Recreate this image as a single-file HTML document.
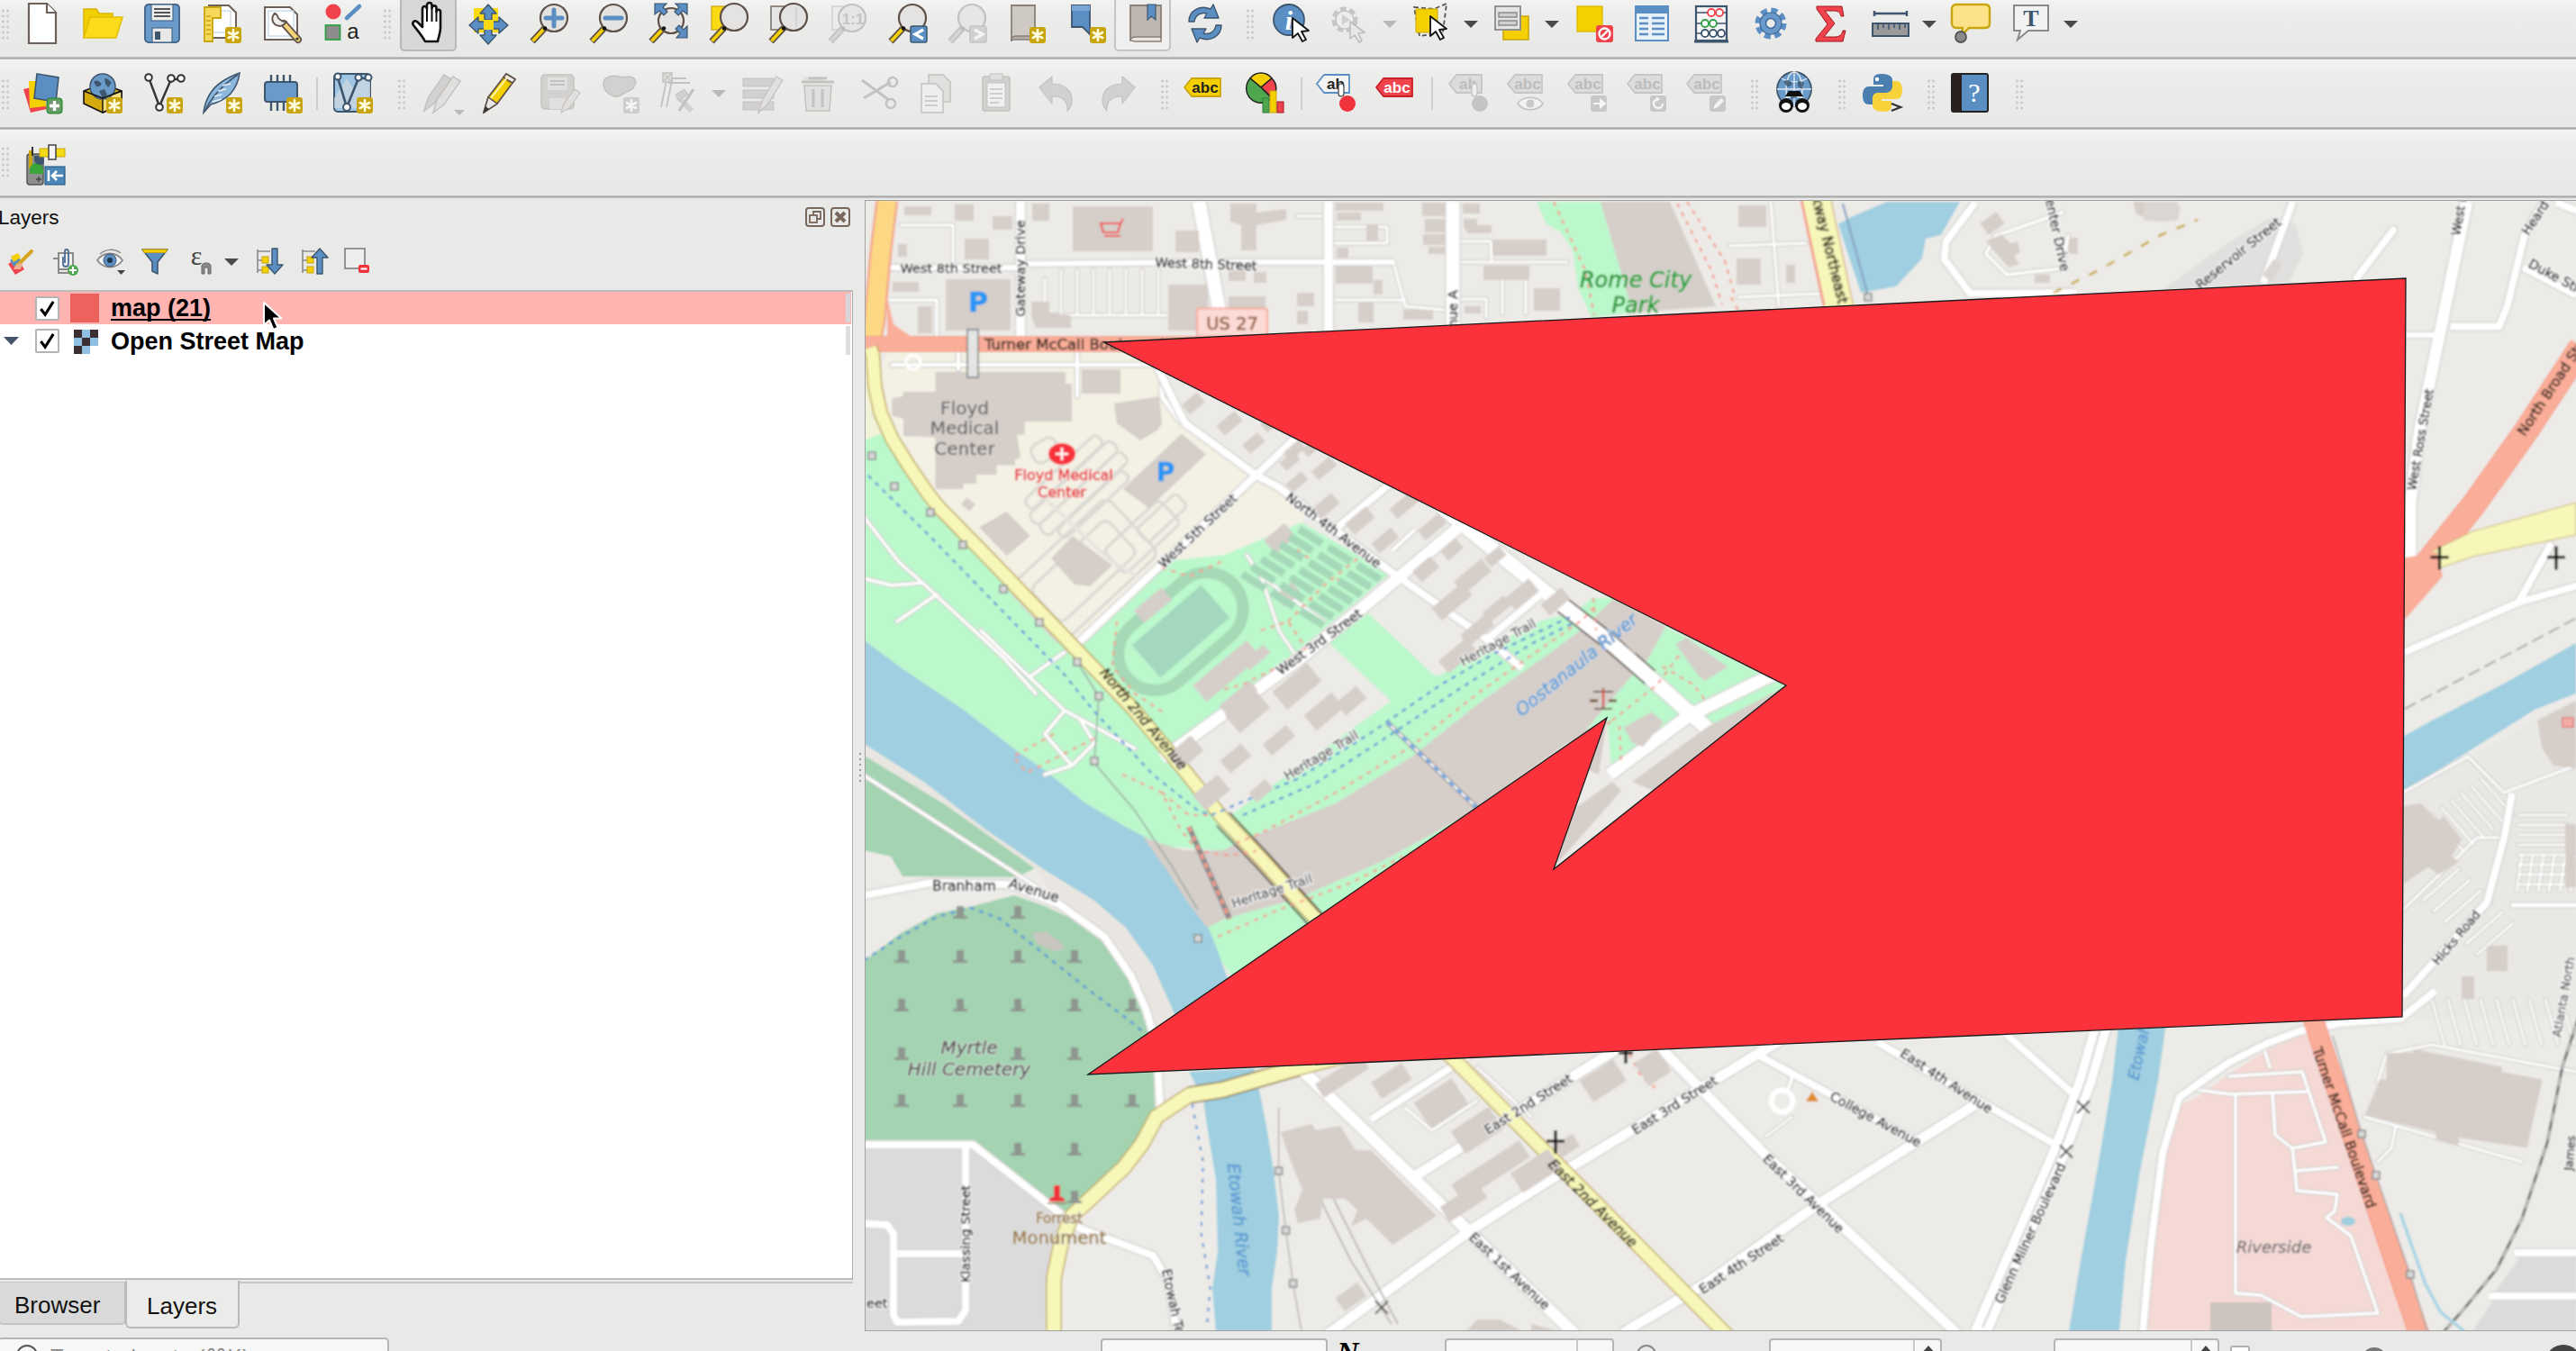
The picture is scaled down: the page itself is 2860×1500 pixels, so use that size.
<!DOCTYPE html>
<html lang="en">
<head>
<meta charset="utf-8">
<title>QGIS</title>
<style>
*{box-sizing:border-box;margin:0;padding:0}
html,body{width:2860px;height:1500px;overflow:hidden;background:#e9e9e8;font-family:"Liberation Sans",sans-serif;color:#000}
#app{position:relative;width:2860px;height:1500px;overflow:hidden;background:#e9e9e8}
.tbrow{position:absolute;left:0;width:2860px;background:linear-gradient(#f3f3f3,#ececeb 25%,#e8e8e7)}
.sep{position:absolute;left:0;width:2860px;height:3px;background:linear-gradient(#d6d6d6,#a9a9a9 33%,#a9a9a9 75%,#eee)}
.ic{position:absolute;width:48px;height:48px;overflow:visible}
.grip{position:absolute;width:10px;height:35px;background-image:radial-gradient(circle,#cdcdcd 1.4px,transparent 1.8px);background-size:5px 6px}
.dd{position:absolute;width:0;height:0;border-left:8px solid transparent;border-right:8px solid transparent;border-top:8px solid #4a4a4a}
.dd.dis{border-top-color:#b9b9b9}
#panel-title{position:absolute;left:-2px;top:228px;font-size:22.5px;line-height:28px;color:#111}
#tree{position:absolute;left:0;top:322px;width:947px;height:1099px;background:#fff;border-top:2px solid #bdbdbd;border-right:1px solid #adadad;border-bottom:2px solid #bdbdbd}
.row{position:absolute;left:0;width:945px;height:36px}
.row .lbl{position:absolute;left:123px;top:2px;font-size:27px;line-height:32px;font-weight:bold;white-space:nowrap;color:#000}
.cb{position:absolute;left:39px;width:27px;height:27px;background:#fff;border:2px solid #b4b4b4;border-radius:2px}
.tab{position:absolute;font-size:26px;line-height:30px;color:#111;border:2px solid #bcbcbc;border-top:none}
#map{position:absolute;left:960px;top:222px;width:1900px;height:1256px;border:1px solid #a2a2a2;border-right:none;box-shadow:inset 1px 1px 0 #d5d5d5,inset 0 -1px 0 #d5d5d5;background:#f1eeea;overflow:hidden}
#map svg{position:absolute;left:-961px;top:-223px}
</style>
</head>
<body>
<div id="app">
<!-- TOOLBARS -->
<div class="tbrow" style="top:0;height:63px"></div>
<div class="sep" style="top:63px"></div>
<div class="tbrow" style="top:66px;height:75px"></div>
<div class="sep" style="top:141px"></div>
<div class="tbrow" style="top:144px;height:73px"></div>
<div class="sep" style="top:217px"></div>
<div id="toolbar-icons">
<svg class="ic" style="left:23.0px;top:2.0px;width:48px;height:48px" viewBox="0 0 48 48"><path d="M9 2h20l10 10v34H9z" fill="#fff" stroke="#6d6058" stroke-width="2.2"/><path d="M29 2v10h10" fill="#fff" stroke="#6d6058" stroke-width="2.2"/></svg>
<svg class="ic" style="left:90.0px;top:2.0px;width:48px;height:48px" viewBox="0 0 48 48"><path d="M3 40V8h14l3 5h15v6H12z" fill="#f2cf00" stroke="#d9b500" stroke-width="1.5"/><path d="M3 40l7-23h36l-7 23z" fill="#fcdb1c" stroke="#e0bd00" stroke-width="1.5"/></svg>
<svg class="ic" style="left:156.0px;top:2.0px;width:48px;height:48px" viewBox="0 0 48 48"><rect x="5" y="3" width="38" height="42" rx="4" fill="#6a9ac9" stroke="#46688c" stroke-width="2"/><rect x="12" y="3" width="24" height="18" fill="#eee" stroke="#46688c" stroke-width="1.2"/><path d="M15 8h18M15 12h18M15 16h18" stroke="#555" stroke-width="2"/><rect x="13" y="29" width="22" height="16" fill="#e8e8e8" stroke="#46688c" stroke-width="1.2"/><rect x="16" y="33" width="6" height="9" fill="#3d566e"/></svg>
<svg class="ic" style="left:222.0px;top:2.0px;width:48px;height:48px" viewBox="0 0 48 48"><path d="M10 4h22l8 8v28H10z" fill="#fff" stroke="#6d6058" stroke-width="2"/><path d="M14 10h20v24H14z" fill="none" stroke="#bcd" stroke-width="1"/><path d="M5 6h18v12h-9v26H5z" fill="#f6d95a" stroke="#c9a50d" stroke-width="1.8"/><path d="M7 16h5M7 21h5M7 26h5M7 31h5M7 36h5" stroke="#c9a50d" stroke-width="1.5"/><g transform="translate(37,37)"><rect x="-9" y="-9" width="18" height="18" rx="3" fill="#c9a50d"/><path d="M0-6v12M-5.2-3l10.4 6M-5.2 3l10.4-6" stroke="#fffbe0" stroke-width="2.6" stroke-linecap="round"/></g></svg>
<svg class="ic" style="left:289.0px;top:2.0px;width:48px;height:48px" viewBox="0 0 48 48"><path d="M5 6h28l8 8v28H5z" fill="#fff" stroke="#6d6058" stroke-width="2"/><rect x="9" y="10" width="28" height="28" fill="none" stroke="#bcd6e6" stroke-width="1.2"/><path d="M42 42l-16-18" stroke="#5e5149" stroke-width="8" stroke-linecap="round"/><path d="M42 42l-15-17" stroke="#f2d37a" stroke-width="4.6" stroke-linecap="round"/><path d="M17 12a8 8 0 1 0 11 11l-4-1-4-4-1-4z" fill="#eee" stroke="#5e5149" stroke-width="1.8" transform="rotate(-8 22 18)"/><circle cx="41" cy="41" r="1.6" fill="#333"/></svg>
<svg class="ic" style="left:355.0px;top:2.0px;width:48px;height:48px" viewBox="0 0 48 48"><circle cx="15" cy="11" r="8.5" fill="#f0434b"/><rect x="6.5" y="26" width="16" height="16" fill="#8c8c8c" stroke="#2ea043" stroke-width="1.8"/><path d="M30 18l14-13" stroke="#5b8fc4" stroke-width="4.5" stroke-linecap="round"/><text x="37" y="41" font-family="Liberation Sans,sans-serif" font-size="24" text-anchor="middle" fill="#222">a</text></svg>
<div class="grip" style="left:425px;top:9px"></div>
<div style="position:absolute;left:444px;top:-3px;width:63px;height:60px;background:#d7d7d7;border:2px solid #b9b9b9;border-radius:5px"></div>
<svg class="ic" style="left:452.0px;top:2.0px;width:48px;height:48px" viewBox="0 0 48 48"><path d="M20 44c-3-6-9-13-13-18-2-3 1-6 4-4l6 6V8c0-4 5-4 5 0v-4c0-4 5.5-4 5.5 0v3c0-3.5 5-3.5 5 0v4c0-3 4.5-3 4.5 0v18c0 6-2 9-3 15z" fill="#fff" stroke="#111" stroke-width="2.6" stroke-linejoin="round"/><path d="M22 8v14M27.5 7v15M32.5 10v12" stroke="#111" stroke-width="2"/></svg>
<svg class="ic" style="left:518.0px;top:2.0px;width:48px;height:48px" viewBox="0 0 48 48"><rect x="8" y="7" width="27" height="27" fill="#fbd913"/><g fill="#5b8fc4" stroke="#3d566e" stroke-width="1.4" stroke-linejoin="round"><path d="M24 3l9 10h-5v7h-8v-7h-5z"/><path d="M24 47l9-10h-5v-7h-8v7h-5z"/><path d="M3 26l10-9v5h7v8h-7v5z"/><path d="M46 26l-10-9v5h-7v8h7v5z"/></g><rect x="19" y="20" width="11" height="11" fill="#fbd913"/></svg>
<svg class="ic" style="left:584.6px;top:2.0px;width:48px;height:48px" viewBox="0 0 48 48"><path d="M6 44l14-15" stroke="#5e5149" stroke-width="7" stroke-linecap="butt"/><path d="M6.5 43.5l13-14" stroke="#f5d000" stroke-width="3.6"/><circle cx="30" cy="18" r="15" fill="#e5e3e1" stroke="#5e5149" stroke-width="2.2"/><circle cx="20" cy="29.5" r="2.3" fill="#111"/><path d="M30 9v18M21 18h18" stroke="#5b8fc4" stroke-width="5" stroke-linecap="round"/></svg>
<svg class="ic" style="left:651.0px;top:2.0px;width:48px;height:48px" viewBox="0 0 48 48"><path d="M6 44l14-15" stroke="#5e5149" stroke-width="7" stroke-linecap="butt"/><path d="M6.5 43.5l13-14" stroke="#f5d000" stroke-width="3.6"/><circle cx="30" cy="18" r="15" fill="#e5e3e1" stroke="#5e5149" stroke-width="2.2"/><circle cx="20" cy="29.5" r="2.3" fill="#111"/><path d="M21 18h18" stroke="#5b8fc4" stroke-width="5" stroke-linecap="round"/></svg>
<svg class="ic" style="left:717.0px;top:2.0px;width:48px;height:48px" viewBox="0 0 48 48"><path d="M6 44l14-15" stroke="#5e5149" stroke-width="7" stroke-linecap="butt"/><path d="M6.5 43.5l13-14" stroke="#f5d000" stroke-width="3.6"/><circle cx="28" cy="21" r="14" fill="#e5e3e1" stroke="#5e5149" stroke-width="2.2"/><circle cx="20" cy="29.5" r="2.3" fill="#111"/><g fill="#5b8fc4" stroke="#3d566e" stroke-width="1.2"><path d="M10 2h13l-4 4 5 5-4 4-5-5-5 4z"/><path d="M46 2H33l4 4-5 5 4 4 5-5 5 4z"/><path d="M46 40V27l-4 4-5-5-4 4 5 5-4 5z"/></g></svg>
<svg class="ic" style="left:783.6px;top:2.0px;width:48px;height:48px" viewBox="0 0 48 48"><rect x="6" y="5" width="22" height="26" fill="#fbd913" stroke="#c9a50d" stroke-width="1.2"/><path d="M6 44l14-15" stroke="#5e5149" stroke-width="7" stroke-linecap="butt"/><path d="M6.5 43.5l13-14" stroke="#f5d000" stroke-width="3.6"/><circle cx="31" cy="17" r="15" fill="#e5e3e1" stroke="#5e5149" stroke-width="2.2"/><circle cx="20" cy="29.5" r="2.3" fill="#111"/></svg>
<svg class="ic" style="left:850.0px;top:2.0px;width:48px;height:48px" viewBox="0 0 48 48"><rect x="6" y="5" width="22" height="26" fill="#e6e6e6" stroke="#8a8078" stroke-width="1.8"/><path d="M6 44l14-15" stroke="#5e5149" stroke-width="7" stroke-linecap="butt"/><path d="M6.5 43.5l13-14" stroke="#f5d000" stroke-width="3.6"/><circle cx="31" cy="17" r="15" fill="#e5e3e1" stroke="#5e5149" stroke-width="2.2"/><circle cx="20" cy="29.5" r="2.3" fill="#111"/><path d="M34 6v22" stroke="#ccc" stroke-width="1.5"/></svg>
<svg class="ic" style="left:916.0px;top:2.0px;width:48px;height:48px" viewBox="0 0 48 48"><rect x="8" y="5" width="22" height="26" fill="#ececec" stroke="#cfcfcf" stroke-width="1.5"/><path d="M6 44l14-15" stroke="#c2c2c2" stroke-width="7" stroke-linecap="butt"/><path d="M6.5 43.5l13-14" stroke="#d4d4d4" stroke-width="3.6"/><circle cx="30" cy="18" r="15" fill="#e6e6e6" stroke="#c2c2c2" stroke-width="2.2"/><circle cx="20" cy="29.5" r="2.3" fill="#bbb"/><text x="31" y="25" font-family="Liberation Sans,sans-serif" font-weight="bold" font-size="17" text-anchor="middle" fill="#c4c4c4">1:1</text></svg>
<svg class="ic" style="left:982.6px;top:2.0px;width:48px;height:48px" viewBox="0 0 48 48"><path d="M6 44l14-15" stroke="#5e5149" stroke-width="7" stroke-linecap="butt"/><path d="M6.5 43.5l13-14" stroke="#f5d000" stroke-width="3.6"/><circle cx="30" cy="18" r="15" fill="#e5e3e1" stroke="#5e5149" stroke-width="2.2"/><circle cx="20" cy="29.5" r="2.3" fill="#111"/><rect x="28" y="27" width="18" height="18" rx="2" fill="#5b8fc4" stroke="#3d566e" stroke-width="1.5"/><path d="M42 31l-9 5 9 5" stroke="#fff" stroke-width="3.2" fill="none"/></svg>
<svg class="ic" style="left:1049.0px;top:2.0px;width:48px;height:48px" viewBox="0 0 48 48"><path d="M6 44l14-15" stroke="#c2c2c2" stroke-width="7" stroke-linecap="butt"/><path d="M6.5 43.5l13-14" stroke="#d4d4d4" stroke-width="3.6"/><circle cx="30" cy="18" r="15" fill="#e6e6e6" stroke="#c2c2c2" stroke-width="2.2"/><circle cx="20" cy="29.5" r="2.3" fill="#bbb"/><rect x="28" y="27" width="18" height="18" rx="2" fill="#d2d2d2" stroke="#c2c2c2" stroke-width="1.5"/><path d="M33 31l9 5-9 5" stroke="#f4f4f4" stroke-width="3.2" fill="none"/></svg>
<svg class="ic" style="left:1115.0px;top:2.0px;width:48px;height:48px" viewBox="0 0 48 48"><path d="M8 4h26v36H14c-4 0-6 2-6 4z" fill="#cfc9c4" stroke="#8a8078" stroke-width="1.8"/><path d="M8 42c0-3 3-4 6-4h20v4z" fill="#b5aea8" stroke="#8a8078" stroke-width="1.5"/><g transform="translate(37,37)"><rect x="-9" y="-9" width="18" height="18" rx="3" fill="#c9a50d"/><path d="M0-6v12M-5.2-3l10.4 6M-5.2 3l10.4-6" stroke="#fffbe0" stroke-width="2.6" stroke-linecap="round"/></g></svg>
<svg class="ic" style="left:1181.6px;top:2.0px;width:48px;height:48px" viewBox="0 0 48 48"><path d="M8 4h20v32l-8-8h-12z" fill="#5b8fc4" stroke="#3d566e" stroke-width="1.8"/><path d="M8 4h20v6H8z" fill="#7aa8d6"/><g transform="translate(37,37)"><rect x="-9" y="-9" width="18" height="18" rx="3" fill="#c9a50d"/><path d="M0-6v12M-5.2-3l10.4 6M-5.2 3l10.4-6" stroke="#fffbe0" stroke-width="2.6" stroke-linecap="round"/></g></svg>
<div style="position:absolute;left:1237px;top:-3px;width:63px;height:60px;background:#efefef;border:2px solid #c4c4c4;border-radius:5px"></div>
<svg class="ic" style="left:1248.0px;top:2.0px;width:48px;height:48px" viewBox="0 0 48 48"><path d="M7 4h34v36H14c-5 0-7 1-7 3z" fill="#bdb5af" stroke="#8a8078" stroke-width="1.8"/><path d="M7 43c0-3 3-4 7-4h27v5H12z" fill="#e9e6e3" stroke="#8a8078" stroke-width="1.5"/><path d="M26 3h9v17l-4.5-4-4.5 4z" fill="#5b8fc4" stroke="#3d566e" stroke-width="1.2"/></svg>
<svg class="ic" style="left:1314.0px;top:2.0px;width:48px;height:48px" viewBox="0 0 48 48"><g fill="#5b8fc4" stroke="#3d566e" stroke-width="1.4" stroke-linejoin="round"><path d="M6 22C6 10 18 3 30 8l3-5 6 15-16 0 3-5c-7-2-13 2-14 9z"/><path d="M42 26c0 12-12 19-24 14l-3 5-6-15 16 0-3 5c7 2 13-2 14-9z"/></g></svg>
<div class="grip" style="left:1383px;top:9px"></div>
<svg class="ic" style="left:1411.0px;top:2.0px;width:48px;height:48px" viewBox="0 0 48 48"><circle cx="20" cy="20" r="17" fill="#5b8fc4" stroke="#3d566e" stroke-width="1.8"/><text x="20" y="31" font-family="Liberation Serif,serif" font-style="italic" font-weight="bold" font-size="30" text-anchor="middle" fill="#fff">i</text><path d="M24 18l18 14-8 1 5 9-4 2-5-9-6 5z" fill="#fff" stroke="#111" stroke-width="1.8" stroke-linejoin="round"/></svg>
<svg class="ic" style="left:1473.0px;top:2.0px;width:48px;height:48px" viewBox="0 0 48 48"><circle cx="20" cy="20" r="11" fill="#e4e4e4" stroke="#c6c6c6" stroke-width="7" stroke-dasharray="6 3.4"/><circle cx="20" cy="20" r="10" fill="#ededed" stroke="#c6c6c6" stroke-width="1.5"/><path d="M17 14l9 6-9 6z" fill="#cfcfcf"/><path d="M26 22l16 12-7 1 4 8-3 2-5-8-5 4z" fill="#e8e8e8" stroke="#bdbdbd" stroke-width="1.6" stroke-linejoin="round"/></svg>
<div class="dd dis" style="left:1535px;top:23px"></div>
<svg class="ic" style="left:1564.0px;top:2.0px;width:48px;height:48px" viewBox="0 0 48 48"><path d="M6 6l22 2 14-6-4 32-26 4z" fill="none" stroke="#555" stroke-width="1.8" stroke-dasharray="5 3"/><path d="M8 8h24v26H8z" fill="#f5d000" stroke="#c9a50d" stroke-width="1"/><path d="M24 16l18 14-8 1 5 9-4 2-5-9-6 5z" fill="#fff" stroke="#111" stroke-width="1.8" stroke-linejoin="round"/></svg>
<div class="dd" style="left:1625px;top:23px"></div>
<svg class="ic" style="left:1655.0px;top:2.0px;width:48px;height:48px" viewBox="0 0 48 48"><rect x="14" y="16" width="28" height="26" fill="#f5d000" stroke="#c9a50d" stroke-width="1.5"/><rect x="5" y="5" width="28" height="26" fill="#e4e4e4" stroke="#8a8a8a" stroke-width="1.8"/><path d="M9 12h20v5H9zM9 21h20v5H9z" fill="#d0d0d0" stroke="#8a8a8a" stroke-width="1.4"/></svg>
<div class="dd" style="left:1715px;top:23px"></div>
<svg class="ic" style="left:1745.0px;top:2.0px;width:48px;height:48px" viewBox="0 0 48 48"><rect x="6" y="5" width="28" height="28" fill="#f5d000" stroke="#d9b500" stroke-width="1.2"/><rect x="27" y="26" width="19" height="19" rx="3" fill="#f0434b"/><circle cx="36.5" cy="35.5" r="6" fill="none" stroke="#fff" stroke-width="2.4"/><path d="M32 40l9-9" stroke="#fff" stroke-width="2.4"/></svg>
<svg class="ic" style="left:1810.0px;top:2.0px;width:48px;height:48px" viewBox="0 0 48 48"><rect x="6" y="5" width="36" height="38" fill="#e9f1f8" stroke="#5b8fc4" stroke-width="2"/><path d="M6 5h36v8H6z" fill="#5b8fc4"/><path d="M10 18h10M24 18h14M10 24h10M24 24h14M10 30h10M24 30h14M10 36h10M24 36h14" stroke="#5b8fc4" stroke-width="2.4"/></svg>
<svg class="ic" style="left:1876.0px;top:2.0px;width:48px;height:48px" viewBox="0 0 48 48"><rect x="7" y="5" width="34" height="38" fill="#f4f4f4" stroke="#3d566e" stroke-width="2.2"/><path d="M5 44h38" stroke="#3d566e" stroke-width="3"/><path d="M7 12h34M7 24h34M7 35h34" stroke="#3d566e" stroke-width="1.6"/><g stroke-width="1.8" fill="#fff"><circle cx="24" cy="12" r="4" stroke="#f0434b"/><circle cx="33" cy="12" r="4" stroke="#f0434b"/><circle cx="17" cy="24" r="4" stroke="#2ea043"/><circle cx="26" cy="24" r="4" stroke="#2ea043"/><circle cx="17" cy="35" r="4" stroke="#3d566e"/><circle cx="26" cy="35" r="4" stroke="#3d566e"/><circle cx="35" cy="35" r="4" stroke="#3d566e"/></g></svg>
<svg class="ic" style="left:1942.0px;top:2.0px;width:48px;height:48px" viewBox="0 0 48 48"><circle cx="24" cy="24" r="13" fill="none" stroke="#5b8fc4" stroke-width="9" stroke-dasharray="6.2 4"/><circle cx="24" cy="24" r="12" fill="#6a9ac9" stroke="#3d6a9c" stroke-width="1.2"/><circle cx="24" cy="24" r="5.5" fill="#ececec" stroke="#3d6a9c" stroke-width="1.5"/></svg>
<svg class="ic" style="left:2007.0px;top:2.0px;width:48px;height:48px" viewBox="0 0 48 48"><path d="M10 5h28l2 11h-3c-1-4-3-6-8-6H19l11 14-12 15h12c5 0 8-2 9-7h3l-3 12H9v-3l13-16L10 8z" fill="#f0434b" stroke="#a01820" stroke-width="1"/></svg>
<svg class="ic" style="left:2075.0px;top:2.0px;width:48px;height:48px" viewBox="0 0 48 48"><path d="M6 10v6M42 10v6M6 13h36" stroke="#3d566e" stroke-width="2.4"/><rect x="4" y="24" width="40" height="14" fill="#9a9a9a" stroke="#3d566e" stroke-width="2"/><path d="M10 24v7M16 24v5M22 24v7M28 24v5M34 24v7M40 24v5" stroke="#3d566e" stroke-width="1.6"/></svg>
<div class="dd" style="left:2134px;top:23px"></div>
<svg class="ic" style="left:2164.0px;top:2.0px;width:48px;height:48px" viewBox="0 0 48 48"><path d="M8 3h32c3 0 5 2 5 5v16c0 3-2 5-5 5H22l-8 8 1-8H8c-3 0-5-2-5-5V8c0-3 2-5 5-5z" fill="#fce38a" stroke="#c9a50d" stroke-width="2.4"/><circle cx="13" cy="39" r="6" fill="#8a8a8a" stroke="#555" stroke-width="1.8"/></svg>
<svg class="ic" style="left:2230.0px;top:2.0px;width:48px;height:48px" viewBox="0 0 48 48"><path d="M6 4h38v28H22l-12 10 3-10H6z" fill="#f2f2f2" stroke="#8a8a8a" stroke-width="2"/><text x="25" y="27" font-family="Liberation Serif,serif" font-weight="bold" font-size="26" text-anchor="middle" fill="#3d566e">T</text></svg>
<div class="dd" style="left:2291px;top:23px"></div>
<svg class="ic" style="left:23.0px;top:79.0px;width:48px;height:48px" viewBox="0 0 48 48"><path d="M3 20l18-4 8 26-18 4z" fill="#f0434b"/><path d="M9 11l17 0 2 28-18 2z" fill="#f5d000"/><path d="M18 3l24 4-3 27-24-4z" fill="#5b8fc4" stroke="#3d566e" stroke-width="1.6"/><rect x="29" y="30" width="17" height="17" rx="3" fill="#4ea64e" stroke="#2e7d32" stroke-width="1"/><rect x="31" y="32" width="13" height="13" rx="1" fill="#8a8a8a" opacity=".55"/><path d="M37.5 33v11M32 38.500h11" stroke="#fff" stroke-width="3.4"/></svg>
<svg class="ic" style="left:90.0px;top:79.0px;width:48px;height:48px" viewBox="0 0 48 48"><path d="M3 22l21-8 21 8v14L24 46 3 36z" fill="#d4aa0f" stroke="#111" stroke-width="1.6" stroke-linejoin="round"/><path d="M24 30v16l21-10V22z" fill="#f6df7a" stroke="#111" stroke-width="1.4" stroke-linejoin="round"/><circle cx="24" cy="17" r="14" fill="#6a9ac9" stroke="#3d566e" stroke-width="1.5"/><path d="M14 12c3-3 6-1 8 1s-2 5-5 4zM26 8c3 0 6 2 8 5l-4 5-3-4zM20 22l6-2 3 6-5 4z" fill="#3d566e"/><path d="M3 22l21 8 21-8" fill="none" stroke="#111" stroke-width="1.4"/><g transform="translate(37,38)"><rect x="-9" y="-9" width="18" height="18" rx="3" fill="#c9a50d"/><path d="M0-6v12M-5.2-3l10.4 6M-5.2 3l10.4-6" stroke="#fffbe0" stroke-width="2.6" stroke-linecap="round"/></g></svg>
<svg class="ic" style="left:156.0px;top:79.0px;width:48px;height:48px" viewBox="0 0 48 48"><path d="M9 7l12 32 13-30h12" fill="none" stroke="#333" stroke-width="2.4"/><g fill="#fff" stroke="#333" stroke-width="2"><circle cx="9" cy="7" r="3.8"/><circle cx="21" cy="40" r="3.8"/><circle cx="34" cy="8" r="3.8"/><circle cx="45" cy="8" r="3.8"/></g><g transform="translate(38,38)"><rect x="-9" y="-9" width="18" height="18" rx="3" fill="#c9a50d"/><path d="M0-6v12M-5.2-3l10.4 6M-5.2 3l10.4-6" stroke="#fffbe0" stroke-width="2.6" stroke-linecap="round"/></g></svg>
<svg class="ic" style="left:222.0px;top:79.0px;width:48px;height:48px" viewBox="0 0 48 48"><path d="M4 46c2-14 8-26 20-34 6-4 14-8 20-10-1 8-4 16-10 23-6 6-14 10-22 12z" fill="#8db8de" stroke="#3d566e" stroke-width="1.6"/><path d="M5 45C12 30 24 16 42 4" fill="none" stroke="#3d566e" stroke-width="1.6"/><path d="M16 28l8-2M20 22l9-2M25 16l9-2M14 34l10-3" stroke="#e8f0f8" stroke-width="1.6"/><g transform="translate(38,38)"><rect x="-9" y="-9" width="18" height="18" rx="3" fill="#c9a50d"/><path d="M0-6v12M-5.2-3l10.4 6M-5.2 3l10.4-6" stroke="#fffbe0" stroke-width="2.6" stroke-linecap="round"/></g></svg>
<svg class="ic" style="left:289.0px;top:79.0px;width:48px;height:48px" viewBox="0 0 48 48"><path d="M12 4v10M19 4v10M26 4v10M33 4v10M12 34v10M19 34v10M26 34v10" stroke="#3d566e" stroke-width="2.4"/><rect x="5" y="12" width="36" height="22" rx="3" fill="#6a9ac9" stroke="#3d566e" stroke-width="2"/><g transform="translate(38,38)"><rect x="-9" y="-9" width="18" height="18" rx="3" fill="#c9a50d"/><path d="M0-6v12M-5.2-3l10.4 6M-5.2 3l10.4-6" stroke="#fffbe0" stroke-width="2.6" stroke-linecap="round"/></g></svg>
<div style="position:absolute;left:351px;top:86px;width:2px;height:36px;background:#cfcfcf"></div>
<svg class="ic" style="left:367.0px;top:79.0px;width:48px;height:48px" viewBox="0 0 48 48"><rect x="4" y="3" width="40" height="42" rx="4" fill="#9fc5e4" stroke="#3d566e" stroke-width="2"/><path d="M4 30l14-22 8 12 8-14 10 6v29H4z" fill="#c9d6df" opacity=".8"/><path d="M8 7l10 33 13-32h12" fill="none" stroke="#3d566e" stroke-width="2.6"/><g fill="#fff" stroke="#3d566e" stroke-width="2"><circle cx="8" cy="6" r="3.5"/><circle cx="18" cy="40" r="4"/><circle cx="31" cy="7" r="3.5"/><circle cx="42" cy="7" r="3.5"/></g><g transform="translate(38,38)"><rect x="-9" y="-9" width="18" height="18" rx="3" fill="#c9a50d"/><path d="M0-6v12M-5.2-3l10.4 6M-5.2 3l10.4-6" stroke="#fffbe0" stroke-width="2.6" stroke-linecap="round"/></g></svg>
<div class="grip" style="left:441px;top:87px"></div>
<svg class="ic" style="left:467.0px;top:79.0px;width:48px;height:48px" viewBox="0 0 48 48"><g fill="#d3d1cf" stroke="#c4c2c0" stroke-width="1.5"><path d="M4 44l4-14L26 4l8 5-18 26z"/><path d="M14 46l4-14L36 6l8 5-18 26z" fill="#e2e0de"/></g></svg>
<div class="dd dis" style="left:504px;top:122px;border-left-width:6px;border-right-width:6px;border-top-width:6px"></div>
<svg class="ic" style="left:531.0px;top:79.0px;width:48px;height:48px" viewBox="0 0 48 48"><path d="M6 46l5-17L31 3l10 6-20 27z" fill="#f5d000" stroke="#5e5149" stroke-width="1.8" stroke-linejoin="round"/><path d="M27 8l10 6" stroke="#c9a50d" stroke-width="2"/><path d="M31 3l10 6-3 4-10-6z" fill="#eee" stroke="#5e5149" stroke-width="1.5"/><path d="M6 46l5-17 10 7z" fill="#e8e8e8" stroke="#5e5149" stroke-width="1.5"/><path d="M6 46l2-7 4 3z" fill="#333"/><path d="M14 30L33 6" stroke="#fff7b0" stroke-width="2"/></svg>
<svg class="ic" style="left:596.6px;top:79.0px;width:48px;height:48px" viewBox="0 0 48 48"><rect x="4" y="4" width="36" height="38" rx="4" fill="#d3d1cf" stroke="#c4c2c0" stroke-width="1.5"/><rect x="11" y="7" width="22" height="14" fill="#e2e0de"/><path d="M14 11h16M14 15h16" stroke="#c4c2c0" stroke-width="2"/><rect x="13" y="30" width="18" height="12" fill="#e2e0de"/><path d="M26 46l3-10 12-16 6 4-12 17z" fill="#e2e0de" stroke="#c4c2c0" stroke-width="1.2"/></svg>
<svg class="ic" style="left:664.0px;top:79.0px;width:48px;height:48px" viewBox="0 0 48 48"><path d="M6 14c0-8 10-10 18-8s12-2 16 2 0 12-6 14-10 8-16 6S6 22 6 14z" fill="#d3d1cf" stroke="#c4c2c0" stroke-width="1.5"/><g transform="translate(37,38)"><rect x="-9" y="-9" width="18" height="18" rx="3" fill="#cfcdcb"/><path d="M0-6v12M-5.2-3l10.4 6M-5.2 3l10.4-6" stroke="#f4f4f4" stroke-width="2.6" stroke-linecap="round"/></g></svg>
<svg class="ic" style="left:728.0px;top:79.0px;width:48px;height:48px" viewBox="0 0 48 48"><path d="M6 40L12 10M12 40L18 10M14 8h20M14 13h24" stroke="#c4c2c0" stroke-width="1.8"/><rect x="8" y="2" width="10" height="10" fill="#e2e0de" stroke="#c4c2c0" stroke-width="1.5"/><path d="M8 2l10 10M18 2L8 12" stroke="#c4c2c0" stroke-width="1.2"/><path d="M24 28l16 16" stroke="#d3d1cf" stroke-width="6"/><path d="M22 26l10-6 4 6-10 6z" fill="#d3d1cf" stroke="#c4c2c0"/><path d="M42 20L26 44" stroke="#c4c2c0" stroke-width="3"/></svg>
<div class="dd dis" style="left:790px;top:100px"></div>
<svg class="ic" style="left:820.0px;top:79.0px;width:48px;height:48px" viewBox="0 0 48 48"><path d="M5 8h34v9H5zM5 21h34v9H5zM5 34h34v9H5z" fill="#d3d1cf" stroke="#c4c2c0" stroke-width="1"/><path d="M22 46l4-13L42 6l7 4-17 27z" fill="#e2e0de" stroke="#c4c2c0" stroke-width="1.2"/></svg>
<svg class="ic" style="left:883.6px;top:79.0px;width:48px;height:48px" viewBox="0 0 48 48"><path d="M8 6h20v6H8z" fill="#e2e0de"/><path d="M6 12h36M14 8h20" stroke="#c4c2c0" stroke-width="3"/><path d="M9 16h30l-2 28H11z" fill="#e2e0de" stroke="#c4c2c0" stroke-width="1.5"/><path d="M19 20v20M29 20v20" stroke="#c4c2c0" stroke-width="3"/></svg>
<svg class="ic" style="left:951.0px;top:79.0px;width:48px;height:48px" viewBox="0 0 48 48"><path d="M6 10l30 22M8 30l30-18" stroke="#c4c2c0" stroke-width="3"/><circle cx="38" cy="36" r="5" fill="none" stroke="#c4c2c0" stroke-width="2.5"/><circle cx="40" cy="12" r="5" fill="none" stroke="#c4c2c0" stroke-width="2.5" transform="rotate(20 40 12)"/></svg>
<svg class="ic" style="left:1015.0px;top:79.0px;width:48px;height:48px" viewBox="0 0 48 48"><path d="M16 4h16l8 8v22H16z" fill="#e2e0de" stroke="#c4c2c0" stroke-width="1.5"/><path d="M8 14h16l8 8v24H8z" fill="#eee" stroke="#c4c2c0" stroke-width="1.5"/><path d="M12 28h14M12 33h14M12 38h14" stroke="#c4c2c0" stroke-width="1.6"/></svg>
<svg class="ic" style="left:1083.0px;top:79.0px;width:48px;height:48px" viewBox="0 0 48 48"><rect x="8" y="6" width="30" height="38" rx="2" fill="#d3d1cf" stroke="#c4c2c0" stroke-width="1.5"/><rect x="16" y="3" width="14" height="7" fill="#e2e0de" stroke="#c4c2c0"/><rect x="13" y="13" width="20" height="27" fill="#f0f0f0" stroke="#c4c2c0"/><path d="M16 20h14M16 25h14M16 30h14M16 35h10" stroke="#c4c2c0" stroke-width="1.6"/></svg>
<svg class="ic" style="left:1150.0px;top:79.0px;width:48px;height:48px" viewBox="0 0 48 48"><path d="M4 18L18 6v8c14 0 22 8 22 18 0 5-2 9-5 12 1-10-4-16-17-16v8z" fill="#d3d1cf" stroke="#c4c2c0" stroke-width="1.2" stroke-linejoin="round"/></svg>
<svg class="ic" style="left:1215.6px;top:79.0px;width:48px;height:48px" viewBox="0 0 48 48"><path d="M44 18L30 6v8C16 14 8 22 8 32c0 5 2 9 5 12-1-10 4-16 17-16v8z" fill="#d3d1cf" stroke="#c4c2c0" stroke-width="1.2" stroke-linejoin="round"/></svg>
<div class="grip" style="left:1288px;top:87px"></div>
<svg class="ic" style="left:1311.0px;top:79.0px;width:48px;height:48px" viewBox="0 0 48 48"><path d="M4 18l8-10 h32 v20 h-32 z" fill="#f5d000" stroke="#c9a50d" stroke-width="1.8" stroke-linejoin="round"/><text x="27" y="24" font-family="Liberation Sans,sans-serif" font-weight="bold" font-size="17" text-anchor="middle" fill="#222">abc</text></svg>
<svg class="ic" style="left:1378.0px;top:79.0px;width:48px;height:48px" viewBox="0 0 48 48"><path d="M22 18L10 8a15 15 0 0 1 24 0z" fill="#f5d000" stroke="#222" stroke-width="1.5"/><path d="M22 18l12-10a15 15 0 0 1 0 22z" fill="#f0434b" stroke="#222" stroke-width="1.5"/><path d="M22 18l12 12a15 15 0 0 1-24-22z" fill="#4ea64e" stroke="#222" stroke-width="1.5"/><rect x="24" y="30" width="7" height="16" fill="#4ea64e" stroke="#2e7d32"/><rect x="32" y="22" width="7" height="24" fill="#f5d000" stroke="#c9a50d"/><rect x="40" y="34" width="7" height="12" fill="#f0434b" stroke="#a01820"/></svg>
<div style="position:absolute;left:1444px;top:86px;width:2px;height:36px;background:#cfcfcf"></div>
<svg class="ic" style="left:1459.0px;top:79.0px;width:48px;height:48px" viewBox="0 0 48 48"><path d="M3 14l8-10 h28 v20 h-28 z" fill="#f4f4f4" stroke="#5b8fc4" stroke-width="1.8" stroke-linejoin="round"/><text x="24" y="20" font-family="Liberation Sans,sans-serif" font-weight="bold" font-size="17" text-anchor="middle" fill="#222">ab</text><rect x="27" y="14" width="6" height="14" rx="3" fill="#fff" stroke="#444" stroke-width="1.2"/><circle cx="37" cy="36" r="9" fill="#f0323c"/></svg>
<svg class="ic" style="left:1524.0px;top:79.0px;width:48px;height:48px" viewBox="0 0 48 48"><path d="M4 18l8-10 h32 v20 h-32 z" fill="#f0434b" stroke="#c81e28" stroke-width="1.8" stroke-linejoin="round"/><text x="27" y="24" font-family="Liberation Sans,sans-serif" font-weight="bold" font-size="17" text-anchor="middle" fill="#fff">abc</text></svg>
<div style="position:absolute;left:1589px;top:86px;width:2px;height:36px;background:#cfcfcf"></div>
<svg class="ic" style="left:1606.0px;top:79.0px;width:48px;height:48px" viewBox="0 0 48 48"><path d="M3 14l8-10 h28 v20 h-28 z" fill="#dcdcdc" stroke="#c6c6c6" stroke-width="1.8" stroke-linejoin="round"/><text x="24" y="20" font-family="Liberation Sans,sans-serif" font-weight="bold" font-size="17" text-anchor="middle" fill="#bcbcbc">ab</text><rect x="28" y="14" width="6" height="14" rx="3" fill="#eee" stroke="#c0c0c0" stroke-width="1.2"/><circle cx="37" cy="36" r="9" fill="#c4c4c4"/></svg>
<svg class="ic" style="left:1671.0px;top:79.0px;width:48px;height:48px" viewBox="0 0 48 48"><path d="M3 14l8-10 h30 v20 h-30 z" fill="#dcdcdc" stroke="#c6c6c6" stroke-width="1.8" stroke-linejoin="round"/><text x="25" y="20" font-family="Liberation Sans,sans-serif" font-weight="bold" font-size="17" text-anchor="middle" fill="#bcbcbc">abc</text><path d="M14 36c6-9 22-9 28 0-6 9-22 9-28 0z" fill="#f2f2f2" stroke="#c2c2c2" stroke-width="1.6"/><circle cx="28" cy="36" r="4.5" fill="#c8c8c8"/></svg>
<svg class="ic" style="left:1738.0px;top:79.0px;width:48px;height:48px" viewBox="0 0 48 48"><path d="M3 14l8-10 h30 v20 h-30 z" fill="#dcdcdc" stroke="#c6c6c6" stroke-width="1.8" stroke-linejoin="round"/><text x="25" y="20" font-family="Liberation Sans,sans-serif" font-weight="bold" font-size="17" text-anchor="middle" fill="#bcbcbc">abc</text><rect x="28" y="27" width="18" height="18" rx="3" fill="#c8c8c8"/><path d="M31 36h8v-4l5 4-5 4v-4" fill="#f4f4f4" stroke="#f4f4f4" stroke-width="2"/></svg>
<svg class="ic" style="left:1804.0px;top:79.0px;width:48px;height:48px" viewBox="0 0 48 48"><path d="M3 14l8-10 h30 v20 h-30 z" fill="#dcdcdc" stroke="#c6c6c6" stroke-width="1.8" stroke-linejoin="round"/><text x="25" y="20" font-family="Liberation Sans,sans-serif" font-weight="bold" font-size="17" text-anchor="middle" fill="#bcbcbc">abc</text><rect x="28" y="27" width="18" height="18" rx="3" fill="#c8c8c8"/><path d="M42 36a5 5 0 1 1-5-5" fill="none" stroke="#f4f4f4" stroke-width="2.4"/><path d="M35 28l4 3-4 3z" fill="#f4f4f4"/></svg>
<svg class="ic" style="left:1870.0px;top:79.0px;width:48px;height:48px" viewBox="0 0 48 48"><path d="M3 14l8-10 h30 v20 h-30 z" fill="#dcdcdc" stroke="#c6c6c6" stroke-width="1.8" stroke-linejoin="round"/><text x="25" y="20" font-family="Liberation Sans,sans-serif" font-weight="bold" font-size="17" text-anchor="middle" fill="#bcbcbc">abc</text><rect x="28" y="27" width="18" height="18" rx="3" fill="#c8c8c8"/><path d="M32 42l2-5 7-7 3 3-7 7z" fill="#f4f4f4"/></svg>
<div class="grip" style="left:1943px;top:87px"></div>
<svg class="ic" style="left:1968.0px;top:79.0px;width:48px;height:48px" viewBox="0 0 48 48"><circle cx="24" cy="20" r="19" fill="#6a9ac9" stroke="#3d566e" stroke-width="1.8"/><path d="M5 20h38M24 1v38M10 8c8 5 20 5 28 0M10 32c8-5 20-5 28 0" stroke="#dfe9f3" stroke-width="1.4" fill="none"/><ellipse cx="24" cy="20" rx="9" ry="19" fill="none" stroke="#dfe9f3" stroke-width="1.4"/><path d="M12 12c3-3 7-2 9 0s-1 6-5 5zM28 10l7 3-2 7-5-3zM18 24l7-1 2 6-6 2z" fill="#3d566e" opacity=".8"/><path d="M14 28l4-6h12l4 6" fill="#111"/><circle cx="15" cy="38" r="8" fill="#111"/><circle cx="33" cy="38" r="8" fill="#111"/><ellipse cx="15" cy="39" rx="5" ry="4" fill="#fff"/><ellipse cx="33" cy="39" rx="5" ry="4" fill="#fff"/></svg>
<div class="grip" style="left:2040px;top:87px"></div>
<svg class="ic" style="left:2067.0px;top:79.0px;width:48px;height:48px" viewBox="0 0 48 48"><path d="M22 3c-8 0-9 3-9 7v5h11v2H8c-4 0-7 3-7 10s3 10 7 10h4v-6c0-4 3-7 7-7h9c4 0 6-3 6-6v-8c0-4-4-7-12-7z" fill="#4a7fb0"/><circle cx="17" cy="9" r="2.2" fill="#fff"/><path d="M24 45c8 0 9-3 9-7v-5H22v-2h16c4 0 7-3 7-10s-3-10-7-10h-4v6c0 4-3 7-7 7h-9c-4 0-6 3-6 6v8c0 4 4 7 12 7z" fill="#f7d23a"/><path d="M33 36l10 4-10 4" stroke="#333" stroke-width="2.4" fill="none"/></svg>
<div class="grip" style="left:2139px;top:87px"></div>
<svg class="ic" style="left:2164.0px;top:79.0px;width:48px;height:48px" viewBox="0 0 48 48"><rect x="3" y="3" width="40" height="42" rx="2" fill="#5b8fc4" stroke="#222" stroke-width="2"/><rect x="3" y="3" width="11" height="42" fill="#2b2020"/><text x="28" y="34" font-family="Liberation Serif,serif" font-size="30" text-anchor="middle" fill="#fff">?</text></svg>
<div class="grip" style="left:2237px;top:87px"></div>
<svg class="ic" style="left:26.0px;top:159.0px;width:48px;height:48px" viewBox="0 0 48 48"><rect x="4" y="12" width="18" height="34" rx="3" fill="#8e8e8e" stroke="#555" stroke-width="1.5"/><rect x="6" y="8" width="4" height="20" fill="#c9a50d"/><path d="M10 4v10" stroke="#333" stroke-width="2"/><path d="M7 30c0-6 4-8 8-8s7 3 7 8v4H7z" fill="#3aa63a"/><path d="M12 14h8c2 0 3 2 3 5s-2 5-4 5-7-2-7-5z" fill="#3d566e"/><path d="M14 40h6M17 37v6" stroke="#444" stroke-width="1.5"/><rect x="18" y="6" width="28" height="9" fill="#f5d913" stroke="#c9a50d"/><rect x="28" y="2" width="8" height="16" fill="#f4f4f4" stroke="#444" stroke-width="1.5"/><rect x="24" y="26" width="22" height="20" fill="#4a86b8" stroke="#2c5f8a" stroke-width="1.2"/><path d="M28 30v12M44 36H32M37 31l-5 5 5 5" stroke="#fff" stroke-width="2.6" fill="none"/></svg>
<div class="grip" style="left:1px;top:162px"></div>
<div class="grip" style="left:1px;top:9px"></div>
<div class="grip" style="left:1px;top:87px"></div>
</div>

<!-- LAYERS PANEL -->
<div id="panel-title">Layers</div>
<div id="panel-icons">
<svg class="ic" style="left:5.0px;top:273px;width:34px;height:34px" viewBox="0 0 34 34"><path d="M4 20l10-6 8 12-10 6z" fill="#f0434b"/><path d="M6 16l9-5 4 7-9 5z" fill="#5b8fc4"/><path d="M7 12l8-4 3 5-8 5z" fill="#f5d000"/><path d="M14 22L30 6" stroke="#d9a520" stroke-width="4" stroke-linecap="round"/><path d="M10 26c2-6 6-8 10-6l-2 6z" fill="#e8b090"/></svg>
<svg class="ic" style="left:55.0px;top:273px;width:34px;height:34px" viewBox="0 0 34 34"><path d="M4 14h6v16h14v-4" fill="none" stroke="#8a8a8a" stroke-width="2"/><rect x="10" y="8" width="16" height="18" fill="#f0f0f0" stroke="#8a8a8a" stroke-width="2"/><path d="M15 12v8a3 3 0 0 0 6 0V6a2 2 0 0 0-4 0v13" fill="none" stroke="#4a6d94" stroke-width="1.8"/><circle cx="26" cy="27" r="6" fill="#4ea64e"/><path d="M26 23v8M22 27h8" stroke="#fff" stroke-width="2.2"/></svg>
<svg class="ic" style="left:106.0px;top:273px;width:34px;height:34px" viewBox="0 0 34 34"><path d="M2 16c7-10 21-10 28 0-7 10-21 10-28 0z" fill="#f4f4f4" stroke="#8a8a8a" stroke-width="1.8"/><circle cx="16" cy="16" r="7" fill="#5b8fc4" stroke="#3d566e"/><circle cx="16" cy="16" r="3" fill="#1f3347"/><path d="M5 9c7-6 16-6 23-1" fill="none" stroke="#8a8a8a" stroke-width="1.5"/><path d="M24 27h9l-4.500 5z" fill="#444"/></svg>
<svg class="ic" style="left:154.5px;top:273px;width:34px;height:34px" viewBox="0 0 34 34"><path d="M3 4h28L20 18v13l-6-3V18z" fill="#5b8fc4" stroke="#3d566e" stroke-width="1.6" stroke-linejoin="round"/><path d="M3 4h28l-2.500 3.500h-23z" fill="#f5d000" stroke="#c9a50d" stroke-width="1"/></svg>
<svg class="ic" style="left:206.6px;top:273px;width:34px;height:34px" viewBox="0 0 34 34"><text x="11" y="21" font-family="Liberation Serif,serif" font-size="30" text-anchor="middle" fill="#444">ε</text><path d="M17 22c0-4 10-4 10 0v9h-3v-7h-4v7h-3z" fill="#8a8a8a" stroke="#666" stroke-width="1"/></svg>
<div class="dd" style="left:249px;top:287px"></div>
<svg class="ic" style="left:280.0px;top:273px;width:34px;height:34px" viewBox="0 0 34 34"><path d="M6 4v26M6 6h14M6 16h8M6 27h8" stroke="#8a8a8a" stroke-width="1.6" fill="none"/><rect x="11" y="12" width="7" height="7" fill="#f5d000" stroke="#c9a50d"/><rect x="11" y="23" width="7" height="7" fill="#f5d000" stroke="#c9a50d"/><path d="M22 3v18h-6l9 10 9-10h-6V3z" fill="#5b8fc4" stroke="#3d566e" stroke-width="1.4" stroke-linejoin="round"/></svg>
<svg class="ic" style="left:329.6px;top:273px;width:34px;height:34px" viewBox="0 0 34 34"><path d="M6 4v26M6 6h14M6 16h8M6 27h8" stroke="#8a8a8a" stroke-width="1.6" fill="none"/><rect x="11" y="12" width="7" height="7" fill="#f5d000" stroke="#c9a50d"/><rect x="11" y="23" width="7" height="7" fill="#f5d000" stroke="#c9a50d"/><path d="M22 31V13h-6l9-10 9 10h-6v18z" fill="#5b8fc4" stroke="#3d566e" stroke-width="1.4" stroke-linejoin="round"/></svg>
<svg class="ic" style="left:379.0px;top:273px;width:34px;height:34px" viewBox="0 0 34 34"><rect x="4" y="3" width="22" height="22" fill="#eeeeee" stroke="#8a8a8a" stroke-width="1.8"/><rect x="19" y="21" width="12" height="9" rx="2" fill="#f0323c"/><path d="M21.500 25.500h7" stroke="#fff" stroke-width="2.2"/></svg>
<svg class="ic" style="left:894px;top:230px;width:22px;height:22px" viewBox="0 0 22 22"><rect x="1" y="1" width="20" height="20" rx="3" fill="none" stroke="#7a675c" stroke-width="2"/><rect x="5" y="9" width="8" height="8" fill="none" stroke="#7a675c" stroke-width="1.8"/><path d="M9 9V5h8v8h-4" fill="none" stroke="#7a675c" stroke-width="1.8"/></svg>
<svg class="ic" style="left:922px;top:230px;width:22px;height:22px" viewBox="0 0 22 22"><rect x="1" y="1" width="20" height="20" rx="3" fill="none" stroke="#7a675c" stroke-width="2"/><path d="M6 6l10 10M16 6L6 16" stroke="#7a675c" stroke-width="4"/></svg>
</div>
<div id="tree">
  <div class="row" style="top:0;height:36px;background:#ffb4b1">
    <div class="cb" style="top:5px"><svg viewBox="0 0 24 24" width="23" height="23"><path d="M4.5 12.500l5 6.500L19 4" fill="none" stroke="#000" stroke-width="3.2"/></svg></div>
    <div style="position:absolute;left:78px;top:2px;width:32px;height:32px;background:#ee625e"></div>
    <div class="lbl" style="text-decoration:underline;text-decoration-thickness:2px;text-underline-offset:3px;text-decoration-skip-ink:none">map (21)</div>
  </div>
  <div class="row" style="top:36px">
    <svg style="position:absolute;left:4px;top:14px" width="17" height="9" viewBox="0 0 17 9"><path d="M0 0h17l-8.500 9z" fill="#44546a"/></svg>
    <div class="cb" style="top:5px"><svg viewBox="0 0 24 24" width="23" height="23"><path d="M4.500 12.500l5 6.500L19 4" fill="none" stroke="#000" stroke-width="3.200"/></svg></div>
    <svg style="position:absolute;left:82px;top:6px" width="27" height="27" viewBox="0 0 27 27"><g fill="#3a2e30"><rect x="0" y="0" width="9" height="9"/><rect x="18" y="0" width="9" height="9"/><rect x="9" y="9" width="9" height="9"/><rect x="0" y="18" width="9" height="9"/></g><g fill="#8fbfe2"><rect x="9" y="0" width="9" height="9"/><rect x="0" y="9" width="9" height="9"/><rect x="18" y="9" width="9" height="9"/><rect x="9" y="18" width="9" height="9"/></g></svg>
    <div class="lbl" style="top:3px">Open Street Map</div>
  </div>
  <div style="position:absolute;left:939px;top:2px;width:5px;height:32px;background:#d6d6d6"></div>
  <div style="position:absolute;left:939px;top:38px;width:5px;height:32px;background:#dedede"></div>
</div>
<svg style="position:absolute;left:291px;top:334px" width="28" height="36" viewBox="0 0 28 36"><path d="M2 2v25l6-5.500 4.500 10.500 5-2.200L13 19.500h8.500z" fill="#000" stroke="#fff" stroke-width="2" stroke-linejoin="round"/></svg>
<div id="tabs">
<div style="position:absolute;left:0;top:1423px;width:947px;height:2px;background:#c6c6c6"></div>
<div class="tab" style="left:-2px;top:1424px;width:142px;height:47px;background:#d9d9d9;border-radius:0 0 5px 5px;padding:10px 0 0 16px;border-color:#c2c2c2">Browser</div>
<div class="tab" style="left:139px;top:1422px;width:127px;height:53px;background:#ebebea;border-radius:0 0 6px 6px;padding:13px 0 0 22px;border-color:#b9b9b9">Layers</div>

</div>

<!-- MAP -->
<div id="map">
<svg id="mapsvg" width="2860" height="1500" viewBox="0 0 2860 1500">
<defs><filter id="blur" x="0" y="0" width="100%" height="100%" filterUnits="userSpaceOnUse"><feGaussianBlur stdDeviation="0.9"/></filter></defs>
<g id="osm" filter="url(#blur)">
<polygon points="940.0,200.0 2880.0,200.0 2880.0,1500.0 940.0,1500.0" fill="#edebe7" />
<polygon points="950.0,1270.0 1080.0,1270.0 1180.0,1348.0 1172.0,1372.0 1163.0,1410.0 1160.0,1478.0 950.0,1478.0" fill="#dcdbdb" />
<polygon points="2798.0,1396.0 2860.0,1396.0 2860.0,1434.0 2770.0,1434.0" fill="#dcdbdb" />
<polygon points="2768.0,1444.0 2860.0,1444.0 2860.0,1478.0 2745.0,1478.0" fill="#dcdbdb" />
<polygon points="2519.0,242.0 2549.0,248.0 2557.0,282.0 2541.0,314.0 2400.0,322.0 2470.0,272.0" fill="#e1e0df" />
<polygon points="2668.0,880.0 2860.0,775.0 2860.0,1130.0 2668.0,1130.0" fill="#e9e8e5" />
<polygon points="985.0,391.0 1290.0,391.0 1292.0,440.0 1316.0,470.0 1395.0,528.0 1452.0,566.0 1445.0,580.0 1360.0,616.0 1287.0,624.0 1199.0,714.0 1188.0,714.0 1104.0,626.0 1042.0,563.0 1010.0,518.0 991.0,488.0 978.0,459.0 972.0,429.0" fill="#f3f1e4" />
<polygon points="950.0,391.0 966.0,391.0 968.0,440.0 982.0,482.0 950.0,492.0" fill="#f1f3d8" />
<polygon points="950.0,492.0 984.0,480.0 1010.0,518.0 1042.0,563.0 1104.0,626.0 1188.0,714.0 1258.0,787.0 1313.0,853.0 1358.0,909.0 1400.0,952.0 1350.0,944.0 1300.0,940.0 1282.0,935.0 1248.0,917.0 1204.0,891.0 1160.0,855.0 1128.0,833.0 1071.0,789.0 1004.0,744.0 950.0,704.0" fill="#bbf8cc" />
<polygon points="1199.0,714.0 1287.0,624.0 1360.0,616.0 1445.0,580.0 1543.0,637.0 1458.0,708.0 1303.0,833.0 1254.0,784.0" fill="#bbf8cc" />
<polygon points="1365.0,906.0 1421.0,866.0 1545.0,778.0 1597.0,751.0 1643.0,723.0 1711.0,689.0 1749.0,680.0 1767.0,664.0 1793.0,664.0 1757.0,698.0 1724.0,723.0 1643.0,780.0 1568.0,840.0 1483.0,892.0 1388.0,930.0 1400.0,952.0 1364.0,912.0" fill="#bbf8cc" />
<polygon points="1476.0,714.0 1507.0,687.0 1519.0,681.0 1558.0,717.0 1590.0,748.0 1600.0,752.0 1547.0,781.0" fill="#bbf8cc" />
<polygon points="1849.0,696.0 1983.0,761.0 1905.0,822.0 1877.0,795.0 1790.0,862.0 1784.0,797.0 1725.0,965.0 1784.0,797.0 1630.0,904.0 1535.0,956.0 1471.0,984.0 1440.0,998.0 1360.0,1020.0 1340.0,1030.0 1352.0,1062.0 1380.0,1100.0 1784.0,797.0 1760.0,811.0 1812.0,750.0 1830.0,731.0" fill="#bbf8cc" />
<polygon points="1706.0,224.0 1777.0,224.0 1813.0,347.0 1767.0,353.0 1752.0,320.0 1746.0,278.0 1733.0,258.0 1717.0,249.0" fill="#bbf8cc" />
<polygon points="950.0,1074.0 1000.0,1036.0 1040.0,1014.0 1080.0,1006.0 1126.0,994.0 1160.0,1006.0 1186.0,1018.0 1230.0,1050.0 1260.0,1090.0 1274.0,1130.0 1280.0,1170.0 1282.0,1236.0 1268.0,1268.0 1248.0,1294.0 1216.0,1324.0 1184.0,1346.0 1080.0,1267.0 950.0,1266.0" fill="#a3d3b1" />
<polygon points="950.0,833.0 1049.0,893.0 1149.0,964.0 1129.0,974.0 1002.0,973.0 989.0,951.0 950.0,942.0" fill="#a3d3b1" />
<polygon points="950.0,820.0 1027.0,869.0 1093.0,920.0 1160.0,966.0 1215.0,1000.0 1250.0,1030.0 1280.0,1072.0 1298.0,1112.0 1310.0,1140.0 1290.0,1150.0 1272.0,1120.0 1256.0,1084.0 1226.0,1040.0 1176.0,1004.0 1149.0,964.0 1049.0,893.0 950.0,833.0" fill="#e9e6e1" />
<polygon points="2560.0,1148.0 2519.0,1165.0 2474.0,1193.0 2440.0,1218.0 2422.0,1226.0 2410.0,1250.0 2398.0,1300.0 2390.0,1386.0 2384.0,1478.0 2684.0,1478.0 2668.0,1420.0 2625.0,1290.0 2575.0,1148.0" fill="#f5d9d5" />
<polygon points="950.0,704.0 1004.0,744.0 1071.0,789.0 1128.0,833.0 1160.0,855.0 1204.0,891.0 1248.0,917.0 1282.0,935.0 1304.0,966.0 1326.0,1010.0 1340.0,1026.0 1352.0,1056.0 1362.0,1084.0 1380.0,1110.0 1330.0,1150.0 1304.0,1126.0 1298.0,1112.0 1280.0,1072.0 1250.0,1030.0 1215.0,1000.0 1160.0,966.0 1093.0,920.0 1027.0,869.0 950.0,820.0" fill="#9fcfe0" />
<polygon points="1320.0,1190.0 1336.0,1220.0 1340.0,1250.0 1350.0,1310.0 1352.0,1390.0 1346.0,1430.0 1350.0,1478.0 1412.0,1478.0 1412.0,1430.0 1418.0,1390.0 1420.0,1350.0 1414.0,1300.0 1406.0,1250.0 1398.0,1210.0 1392.0,1186.0" fill="#9fcfe0" />
<polygon points="2353.0,1130.0 2406.0,1128.0 2396.0,1200.0 2376.0,1300.0 2360.0,1400.0 2353.0,1478.0 2297.0,1478.0 2310.0,1400.0 2330.0,1290.0 2345.0,1200.0" fill="#9fcfe0" />
<polygon points="2660.0,822.0 2700.0,800.0 2778.0,760.0 2860.0,714.0 2860.0,770.0 2814.0,788.0 2738.0,836.0 2660.0,884.0" fill="#9fcfe0" />
<polygon points="2095.0,224.0 2176.0,224.0 2155.0,261.0 2138.0,265.0 2134.0,287.0 2105.0,318.0 2089.0,321.0 2066.0,325.0 2041.0,249.0 2055.0,241.0" fill="#9fcfe0" />
<ellipse cx="2607" cy="1356" rx="8" ry="5" fill="#9fcfe0"/>
<polygon points="1777.0,224.0 1854.0,224.0 1905.0,340.0 1813.0,347.0" fill="#d6cec9" />
<polygon points="1793.0,664.0 1849.0,696.0 1830.0,731.0 1812.0,750.0 1760.0,811.0 1630.0,904.0 1535.0,956.0 1471.0,984.0 1440.0,998.0 1360.0,1020.0 1340.0,1030.0 1316.0,998.0 1296.0,967.0 1269.0,929.0 1284.0,935.0 1313.0,944.0 1358.0,944.0 1380.0,933.0 1483.0,892.0 1568.0,840.0 1643.0,780.0 1724.0,723.0 1757.0,698.0" fill="#d6cec9" />
<g transform="translate(1311,701) rotate(-41)"><rect x="-78.5" y="-40.5" width="157" height="81" rx="40.5" fill="#bbf8cc" stroke="#a6d9b6" stroke-width="13"/><rect x="-51" y="-24" width="102" height="48" fill="#a3d8bf"/></g>
<rect x="1130.0" y="528.0" width="124.0" height="16.0" rx="6" fill="none" stroke="#dad8d3" stroke-width="3" transform="rotate(-43 1192.0 536.0)"/>
<rect x="1141.0" y="540.0" width="124.0" height="16.0" rx="6" fill="none" stroke="#dad8d3" stroke-width="3" transform="rotate(-43 1203.0 548.0)"/>
<rect x="1126.0" y="517.0" width="110.0" height="14.0" rx="6" fill="none" stroke="#dad8d3" stroke-width="3" transform="rotate(-43 1181.0 524.0)"/>
<rect x="1164.0" y="553.0" width="100.0" height="14.0" rx="6" fill="none" stroke="#dad8d3" stroke-width="3" transform="rotate(-43 1214.0 560.0)"/>
<rect x="1128.0" y="591.0" width="150.0" height="86.0" rx="10" fill="none" stroke="#dad8d3" stroke-width="3" transform="rotate(-43 1203.0 634.0)"/>
<rect x="1145.0" y="608.0" width="116.0" height="52.0" rx="8" fill="none" stroke="#dad8d3" stroke-width="3" transform="rotate(-43 1203.0 634.0)"/>
<rect x="1226.0" y="578.0" width="84.0" height="36.0" rx="6" fill="none" stroke="#dad8d3" stroke-width="3" transform="rotate(-43 1268.0 596.0)"/>
<rect x="1260.0" y="565.0" width="60.0" height="20.0" rx="5" fill="none" stroke="#dad8d3" stroke-width="3" transform="rotate(-43 1290.0 575.0)"/>
<rect x="1145.0" y="489.0" width="30.0" height="22.0" rx="8" fill="none" stroke="#dad8d3" stroke-width="3" transform="rotate(-30 1160.0 500.0)"/>
<polyline points="1163.0,556.0 1230.0,620.0 1262.0,640.0" fill="none" stroke="#e6e4df" stroke-width="4" />
<polyline points="1290.0,400.0 1290.0,440.0 1310.0,468.0" fill="none" stroke="#cfcdca" stroke-width="7.4" stroke-linejoin="round" stroke-linecap="round"/>
<polyline points="1064.0,392.0 1064.0,410.0" fill="none" stroke="#cfcdca" stroke-width="6.4" stroke-linejoin="round" stroke-linecap="round"/>
<polyline points="1196.0,392.0 1196.0,440.0" fill="none" stroke="#cfcdca" stroke-width="6.4" stroke-linejoin="round" stroke-linecap="round"/>
<polyline points="990.0,405.0 1290.0,405.0" fill="none" stroke="#cfcdca" stroke-width="6.4" stroke-linejoin="round" stroke-linecap="round"/>
<polyline points="1089.0,700.0 1182.0,789.0 1260.0,831.0" fill="none" stroke="#cfcdca" stroke-width="5.9" stroke-linejoin="round" stroke-linecap="round"/>
<polyline points="1144.0,751.0 1182.0,724.0" fill="none" stroke="#cfcdca" stroke-width="5.9" stroke-linejoin="round" stroke-linecap="round"/>
<polyline points="950.0,562.0 998.0,624.0 1024.0,647.0 1114.0,730.0 1150.0,770.0" fill="none" stroke="#cfcdca" stroke-width="5.9" stroke-linejoin="round" stroke-linecap="round"/>
<polyline points="950.0,640.0 990.0,650.0 1024.0,647.0" fill="none" stroke="#cfcdca" stroke-width="5.9" stroke-linejoin="round" stroke-linecap="round"/>
<polyline points="996.0,690.0 1040.0,660.0" fill="none" stroke="#cfcdca" stroke-width="5.9" stroke-linejoin="round" stroke-linecap="round"/>
<polyline points="1182.0,789.0 1160.0,815.0 1190.0,850.0 1160.0,860.0" fill="none" stroke="#cfcdca" stroke-width="5.9" stroke-linejoin="round" stroke-linecap="round"/>
<polyline points="1190.0,850.0 1215.0,825.0 1200.0,800.0" fill="none" stroke="#cfcdca" stroke-width="5.9" stroke-linejoin="round" stroke-linecap="round"/>
<polyline points="950.0,855.0 1153.0,986.0" fill="none" stroke="#cfcdca" stroke-width="5.9" stroke-linejoin="round" stroke-linecap="round"/>
<polyline points="1384.0,616.0 1400.0,640.0 1420.0,700.0 1440.0,730.0" fill="none" stroke="#cfcdca" stroke-width="5.4" stroke-linejoin="round" stroke-linecap="round"/>
<polyline points="1400.0,640.0 1470.0,690.0" fill="none" stroke="#cfcdca" stroke-width="5.4" stroke-linejoin="round" stroke-linecap="round"/>
<polyline points="2482.0,1215.0 2482.0,1436.0" fill="none" stroke="#cfcdca" stroke-width="5.9" stroke-linejoin="round" stroke-linecap="round"/>
<polyline points="2476.0,1215.0 2561.0,1212.0" fill="none" stroke="#cfcdca" stroke-width="5.9" stroke-linejoin="round" stroke-linecap="round"/>
<polyline points="2523.0,1215.0 2526.0,1260.0 2545.0,1275.0 2548.0,1300.0 2595.0,1296.0" fill="none" stroke="#cfcdca" stroke-width="5.9" stroke-linejoin="round" stroke-linecap="round"/>
<polyline points="2548.0,1300.0 2550.0,1322.0 2595.0,1326.0 2592.0,1345.0 2583.0,1352.0 2610.0,1372.0 2640.0,1458.0 2555.0,1462.0 2510.0,1438.0 2482.0,1436.0" fill="none" stroke="#cfcdca" stroke-width="5.9" stroke-linejoin="round" stroke-linecap="round"/>
<polyline points="2475.0,1195.0 2556.0,1190.0 2582.0,1268.0 2545.0,1275.0" fill="none" stroke="#cfcdca" stroke-width="5.9" stroke-linejoin="round" stroke-linecap="round"/>
<polyline points="2440.0,1210.0 2476.0,1215.0" fill="none" stroke="#cfcdca" stroke-width="5.9" stroke-linejoin="round" stroke-linecap="round"/>
<polyline points="2514.0,1165.0 2520.0,1185.0" fill="none" stroke="#cfcdca" stroke-width="5.9" stroke-linejoin="round" stroke-linecap="round"/>
<polyline points="2800.0,950.0 2794.0,990.0" fill="none" stroke="#cfcdca" stroke-width="4.9" stroke-linejoin="round" stroke-linecap="round"/>
<polyline points="2812.0,950.0 2806.0,990.0" fill="none" stroke="#cfcdca" stroke-width="4.9" stroke-linejoin="round" stroke-linecap="round"/>
<polyline points="2824.0,950.0 2818.0,990.0" fill="none" stroke="#cfcdca" stroke-width="4.9" stroke-linejoin="round" stroke-linecap="round"/>
<polyline points="2836.0,950.0 2830.0,990.0" fill="none" stroke="#cfcdca" stroke-width="4.9" stroke-linejoin="round" stroke-linecap="round"/>
<polyline points="2848.0,950.0 2842.0,990.0" fill="none" stroke="#cfcdca" stroke-width="4.9" stroke-linejoin="round" stroke-linecap="round"/>
<polyline points="2860.0,950.0 2854.0,990.0" fill="none" stroke="#cfcdca" stroke-width="4.9" stroke-linejoin="round" stroke-linecap="round"/>
<polyline points="2872.0,950.0 2866.0,990.0" fill="none" stroke="#cfcdca" stroke-width="4.9" stroke-linejoin="round" stroke-linecap="round"/>
<polyline points="2884.0,950.0 2878.0,990.0" fill="none" stroke="#cfcdca" stroke-width="4.9" stroke-linejoin="round" stroke-linecap="round"/>
<polyline points="2896.0,950.0 2890.0,990.0" fill="none" stroke="#cfcdca" stroke-width="4.9" stroke-linejoin="round" stroke-linecap="round"/>
<polyline points="2796.0,905.0 2850.0,905.0" fill="none" stroke="#cfcdca" stroke-width="4.9" stroke-linejoin="round" stroke-linecap="round"/>
<polyline points="2796.0,916.0 2850.0,916.0" fill="none" stroke="#cfcdca" stroke-width="4.9" stroke-linejoin="round" stroke-linecap="round"/>
<polyline points="2796.0,927.0 2850.0,927.0" fill="none" stroke="#cfcdca" stroke-width="4.9" stroke-linejoin="round" stroke-linecap="round"/>
<polyline points="2796.0,938.0 2850.0,938.0" fill="none" stroke="#cfcdca" stroke-width="4.9" stroke-linejoin="round" stroke-linecap="round"/>
<polyline points="2796.0,949.0 2850.0,949.0" fill="none" stroke="#cfcdca" stroke-width="4.9" stroke-linejoin="round" stroke-linecap="round"/>
<polyline points="2796.0,960.0 2850.0,960.0" fill="none" stroke="#cfcdca" stroke-width="4.9" stroke-linejoin="round" stroke-linecap="round"/>
<polyline points="2796.0,971.0 2850.0,971.0" fill="none" stroke="#cfcdca" stroke-width="4.9" stroke-linejoin="round" stroke-linecap="round"/>
<polyline points="2796.0,982.0 2850.0,982.0" fill="none" stroke="#cfcdca" stroke-width="4.9" stroke-linejoin="round" stroke-linecap="round"/>
<polyline points="2700.0,1110.0 2714.0,1160.0" fill="none" stroke="#cfcdca" stroke-width="4.9" stroke-linejoin="round" stroke-linecap="round"/>
<polyline points="2718.0,1110.0 2732.0,1160.0" fill="none" stroke="#cfcdca" stroke-width="4.9" stroke-linejoin="round" stroke-linecap="round"/>
<polyline points="2736.0,1110.0 2750.0,1160.0" fill="none" stroke="#cfcdca" stroke-width="4.9" stroke-linejoin="round" stroke-linecap="round"/>
<polyline points="2754.0,1110.0 2768.0,1160.0" fill="none" stroke="#cfcdca" stroke-width="4.9" stroke-linejoin="round" stroke-linecap="round"/>
<polyline points="2772.0,1110.0 2786.0,1160.0" fill="none" stroke="#cfcdca" stroke-width="4.9" stroke-linejoin="round" stroke-linecap="round"/>
<polyline points="2790.0,1110.0 2804.0,1160.0" fill="none" stroke="#cfcdca" stroke-width="4.9" stroke-linejoin="round" stroke-linecap="round"/>
<polyline points="2808.0,1110.0 2822.0,1160.0" fill="none" stroke="#cfcdca" stroke-width="4.9" stroke-linejoin="round" stroke-linecap="round"/>
<polyline points="2826.0,1110.0 2840.0,1160.0" fill="none" stroke="#cfcdca" stroke-width="4.9" stroke-linejoin="round" stroke-linecap="round"/>
<polyline points="2844.0,1110.0 2858.0,1160.0" fill="none" stroke="#cfcdca" stroke-width="4.9" stroke-linejoin="round" stroke-linecap="round"/>
<polyline points="2690.0,1000.0 2730.0,965.0" fill="none" stroke="#cfcdca" stroke-width="4.9" stroke-linejoin="round" stroke-linecap="round"/>
<polyline points="2702.0,1012.0 2742.0,977.0" fill="none" stroke="#cfcdca" stroke-width="4.9" stroke-linejoin="round" stroke-linecap="round"/>
<polyline points="2714.0,1024.0 2754.0,989.0" fill="none" stroke="#cfcdca" stroke-width="4.9" stroke-linejoin="round" stroke-linecap="round"/>
<polyline points="2726.0,1036.0 2766.0,1001.0" fill="none" stroke="#cfcdca" stroke-width="4.9" stroke-linejoin="round" stroke-linecap="round"/>
<polyline points="2738.0,1048.0 2778.0,1013.0" fill="none" stroke="#cfcdca" stroke-width="4.9" stroke-linejoin="round" stroke-linecap="round"/>
<polyline points="2750.0,1060.0 2790.0,1025.0" fill="none" stroke="#cfcdca" stroke-width="4.9" stroke-linejoin="round" stroke-linecap="round"/>
<polyline points="2700.0,905.0 2735.0,945.0" fill="none" stroke="#cfcdca" stroke-width="4.9" stroke-linejoin="round" stroke-linecap="round"/>
<polyline points="2711.0,897.0 2746.0,937.0" fill="none" stroke="#cfcdca" stroke-width="4.9" stroke-linejoin="round" stroke-linecap="round"/>
<polyline points="2722.0,889.0 2757.0,929.0" fill="none" stroke="#cfcdca" stroke-width="4.9" stroke-linejoin="round" stroke-linecap="round"/>
<polyline points="2733.0,881.0 2768.0,921.0" fill="none" stroke="#cfcdca" stroke-width="4.9" stroke-linejoin="round" stroke-linecap="round"/>
<polyline points="2744.0,873.0 2779.0,913.0" fill="none" stroke="#cfcdca" stroke-width="4.9" stroke-linejoin="round" stroke-linecap="round"/>
<polyline points="2755.0,865.0 2790.0,905.0" fill="none" stroke="#cfcdca" stroke-width="4.9" stroke-linejoin="round" stroke-linecap="round"/>
<polyline points="2668.0,880.0 2740.0,840.0 2780.0,880.0 2860.0,850.0" fill="none" stroke="#cfcdca" stroke-width="5.4" stroke-linejoin="round" stroke-linecap="round"/>
<polyline points="2668.0,1010.0 2720.0,960.0 2750.0,930.0 2775.0,930.0" fill="none" stroke="#cfcdca" stroke-width="5.4" stroke-linejoin="round" stroke-linecap="round"/>
<polyline points="2790.0,1005.0 2860.0,1005.0" fill="none" stroke="#cfcdca" stroke-width="7.4" stroke-linejoin="round" stroke-linecap="round"/>
<polyline points="2700.0,1160.0 2860.0,1190.0" fill="none" stroke="#cfcdca" stroke-width="5.4" stroke-linejoin="round" stroke-linecap="round"/>
<polyline points="2640.0,1200.0 2650.0,1170.0 2700.0,1160.0" fill="none" stroke="#cfcdca" stroke-width="5.4" stroke-linejoin="round" stroke-linecap="round"/>
<polyline points="2625.0,1240.0 2660.0,1250.0 2655.0,1275.0 2640.0,1290.0" fill="none" stroke="#cfcdca" stroke-width="5.4" stroke-linejoin="round" stroke-linecap="round"/>
<polyline points="2660.0,1250.0 2800.0,1290.0" fill="none" stroke="#cfcdca" stroke-width="5.4" stroke-linejoin="round" stroke-linecap="round"/>
<polyline points="2290.0,236.0 2215.0,262.0 2205.0,282.0 2228.0,305.0 2290.0,298.0 2296.0,262.0" fill="none" stroke="#cfcdca" stroke-width="5.9" stroke-linejoin="round" stroke-linecap="round"/>
<polyline points="1920.0,273.0 2005.0,270.0" fill="none" stroke="#cfcdca" stroke-width="5.4" stroke-linejoin="round" stroke-linecap="round"/>
<polyline points="1966.0,224.0 1975.0,340.0" fill="none" stroke="#cfcdca" stroke-width="5.4" stroke-linejoin="round" stroke-linecap="round"/>
<polyline points="1930.0,330.0 2020.0,326.0" fill="none" stroke="#cfcdca" stroke-width="5.4" stroke-linejoin="round" stroke-linecap="round"/>
<polyline points="1440.0,240.0 1470.0,240.0" fill="none" stroke="#cfcdca" stroke-width="5.4" stroke-linejoin="round" stroke-linecap="round"/>
<polyline points="1480.0,252.0 1540.0,252.0 1540.0,270.0 1480.0,270.0" fill="none" stroke="#cfcdca" stroke-width="5.4" stroke-linejoin="round" stroke-linecap="round"/>
<polyline points="1480.0,333.0 1560.0,333.0" fill="none" stroke="#cfcdca" stroke-width="5.4" stroke-linejoin="round" stroke-linecap="round"/>
<polyline points="1547.0,291.0 1560.0,340.0 1603.0,344.0" fill="none" stroke="#cfcdca" stroke-width="5.4" stroke-linejoin="round" stroke-linecap="round"/>
<polyline points="1621.0,268.0 1655.0,268.0 1656.0,290.0" fill="none" stroke="#cfcdca" stroke-width="5.4" stroke-linejoin="round" stroke-linecap="round"/>
<polyline points="1621.0,291.0 1740.0,291.0" fill="none" stroke="#cfcdca" stroke-width="5.4" stroke-linejoin="round" stroke-linecap="round"/>
<polyline points="1621.0,332.0 1650.0,332.0 1650.0,352.0" fill="none" stroke="#cfcdca" stroke-width="5.4" stroke-linejoin="round" stroke-linecap="round"/>
<polyline points="1668.0,300.0 1668.0,348.0" fill="none" stroke="#cfcdca" stroke-width="5.4" stroke-linejoin="round" stroke-linecap="round"/>
<polyline points="1694.0,312.0 1694.0,348.0" fill="none" stroke="#cfcdca" stroke-width="5.4" stroke-linejoin="round" stroke-linecap="round"/>
<polyline points="1160.0,310.0 1160.0,350.0 1310.0,350.0" fill="none" stroke="#cfcdca" stroke-width="5.4" stroke-linejoin="round" stroke-linecap="round"/>
<polyline points="1178.0,300.0 1178.0,348.0" fill="none" stroke="#cfcdca" stroke-width="4.9" stroke-linejoin="round" stroke-linecap="round"/>
<polyline points="1196.0,300.0 1196.0,348.0" fill="none" stroke="#cfcdca" stroke-width="4.9" stroke-linejoin="round" stroke-linecap="round"/>
<polyline points="1214.0,300.0 1214.0,348.0" fill="none" stroke="#cfcdca" stroke-width="4.9" stroke-linejoin="round" stroke-linecap="round"/>
<polyline points="1232.0,300.0 1232.0,348.0" fill="none" stroke="#cfcdca" stroke-width="4.9" stroke-linejoin="round" stroke-linecap="round"/>
<polyline points="1250.0,300.0 1250.0,348.0" fill="none" stroke="#cfcdca" stroke-width="4.9" stroke-linejoin="round" stroke-linecap="round"/>
<polyline points="1268.0,300.0 1268.0,348.0" fill="none" stroke="#cfcdca" stroke-width="4.9" stroke-linejoin="round" stroke-linecap="round"/>
<polyline points="1286.0,300.0 1286.0,348.0" fill="none" stroke="#cfcdca" stroke-width="4.9" stroke-linejoin="round" stroke-linecap="round"/>
<polyline points="985.0,333.0 1040.0,333.0 1040.0,372.0" fill="none" stroke="#cfcdca" stroke-width="5.9" stroke-linejoin="round" stroke-linecap="round"/>
<polyline points="1000.0,250.0 1058.0,250.0 1058.0,297.0" fill="none" stroke="#cfcdca" stroke-width="5.4" stroke-linejoin="round" stroke-linecap="round"/>
<polyline points="1560.0,1230.0 1590.0,1255.0 1640.0,1222.0" fill="none" stroke="#cfcdca" stroke-width="5.4" stroke-linejoin="round" stroke-linecap="round"/>
<polyline points="1640.0,1185.0 1700.0,1240.0" fill="none" stroke="#cfcdca" stroke-width="5.4" stroke-linejoin="round" stroke-linecap="round"/>
<polyline points="1990.0,1240.0 1960.0,1262.0" fill="none" stroke="#cfcdca" stroke-width="4.9" stroke-linejoin="round" stroke-linecap="round"/>
<polyline points="1290.0,400.0 1290.0,440.0 1310.0,468.0" fill="none" stroke="#ffffff" stroke-width="5" stroke-linejoin="round" stroke-linecap="round"/>
<polyline points="1064.0,392.0 1064.0,410.0" fill="none" stroke="#ffffff" stroke-width="4" stroke-linejoin="round" stroke-linecap="round"/>
<polyline points="1196.0,392.0 1196.0,440.0" fill="none" stroke="#ffffff" stroke-width="4" stroke-linejoin="round" stroke-linecap="round"/>
<polyline points="990.0,405.0 1290.0,405.0" fill="none" stroke="#ffffff" stroke-width="4" stroke-linejoin="round" stroke-linecap="round"/>
<polyline points="1089.0,700.0 1182.0,789.0 1260.0,831.0" fill="none" stroke="#ffffff" stroke-width="3.5" stroke-linejoin="round" stroke-linecap="round"/>
<polyline points="1144.0,751.0 1182.0,724.0" fill="none" stroke="#ffffff" stroke-width="3.5" stroke-linejoin="round" stroke-linecap="round"/>
<polyline points="950.0,562.0 998.0,624.0 1024.0,647.0 1114.0,730.0 1150.0,770.0" fill="none" stroke="#ffffff" stroke-width="3.5" stroke-linejoin="round" stroke-linecap="round"/>
<polyline points="950.0,640.0 990.0,650.0 1024.0,647.0" fill="none" stroke="#ffffff" stroke-width="3.5" stroke-linejoin="round" stroke-linecap="round"/>
<polyline points="996.0,690.0 1040.0,660.0" fill="none" stroke="#ffffff" stroke-width="3.5" stroke-linejoin="round" stroke-linecap="round"/>
<polyline points="1182.0,789.0 1160.0,815.0 1190.0,850.0 1160.0,860.0" fill="none" stroke="#ffffff" stroke-width="3.5" stroke-linejoin="round" stroke-linecap="round"/>
<polyline points="1190.0,850.0 1215.0,825.0 1200.0,800.0" fill="none" stroke="#ffffff" stroke-width="3.5" stroke-linejoin="round" stroke-linecap="round"/>
<polyline points="950.0,855.0 1153.0,986.0" fill="none" stroke="#ffffff" stroke-width="3.5" stroke-linejoin="round" stroke-linecap="round"/>
<polyline points="1384.0,616.0 1400.0,640.0 1420.0,700.0 1440.0,730.0" fill="none" stroke="#ffffff" stroke-width="3" stroke-linejoin="round" stroke-linecap="round"/>
<polyline points="1400.0,640.0 1470.0,690.0" fill="none" stroke="#ffffff" stroke-width="3" stroke-linejoin="round" stroke-linecap="round"/>
<polyline points="2482.0,1215.0 2482.0,1436.0" fill="none" stroke="#ffffff" stroke-width="3.5" stroke-linejoin="round" stroke-linecap="round"/>
<polyline points="2476.0,1215.0 2561.0,1212.0" fill="none" stroke="#ffffff" stroke-width="3.5" stroke-linejoin="round" stroke-linecap="round"/>
<polyline points="2523.0,1215.0 2526.0,1260.0 2545.0,1275.0 2548.0,1300.0 2595.0,1296.0" fill="none" stroke="#ffffff" stroke-width="3.5" stroke-linejoin="round" stroke-linecap="round"/>
<polyline points="2548.0,1300.0 2550.0,1322.0 2595.0,1326.0 2592.0,1345.0 2583.0,1352.0 2610.0,1372.0 2640.0,1458.0 2555.0,1462.0 2510.0,1438.0 2482.0,1436.0" fill="none" stroke="#ffffff" stroke-width="3.5" stroke-linejoin="round" stroke-linecap="round"/>
<polyline points="2475.0,1195.0 2556.0,1190.0 2582.0,1268.0 2545.0,1275.0" fill="none" stroke="#ffffff" stroke-width="3.5" stroke-linejoin="round" stroke-linecap="round"/>
<polyline points="2440.0,1210.0 2476.0,1215.0" fill="none" stroke="#ffffff" stroke-width="3.5" stroke-linejoin="round" stroke-linecap="round"/>
<polyline points="2514.0,1165.0 2520.0,1185.0" fill="none" stroke="#ffffff" stroke-width="3.5" stroke-linejoin="round" stroke-linecap="round"/>
<polyline points="2800.0,950.0 2794.0,990.0" fill="none" stroke="#ffffff" stroke-width="2.5" stroke-linejoin="round" stroke-linecap="round"/>
<polyline points="2812.0,950.0 2806.0,990.0" fill="none" stroke="#ffffff" stroke-width="2.5" stroke-linejoin="round" stroke-linecap="round"/>
<polyline points="2824.0,950.0 2818.0,990.0" fill="none" stroke="#ffffff" stroke-width="2.5" stroke-linejoin="round" stroke-linecap="round"/>
<polyline points="2836.0,950.0 2830.0,990.0" fill="none" stroke="#ffffff" stroke-width="2.5" stroke-linejoin="round" stroke-linecap="round"/>
<polyline points="2848.0,950.0 2842.0,990.0" fill="none" stroke="#ffffff" stroke-width="2.5" stroke-linejoin="round" stroke-linecap="round"/>
<polyline points="2860.0,950.0 2854.0,990.0" fill="none" stroke="#ffffff" stroke-width="2.5" stroke-linejoin="round" stroke-linecap="round"/>
<polyline points="2872.0,950.0 2866.0,990.0" fill="none" stroke="#ffffff" stroke-width="2.5" stroke-linejoin="round" stroke-linecap="round"/>
<polyline points="2884.0,950.0 2878.0,990.0" fill="none" stroke="#ffffff" stroke-width="2.5" stroke-linejoin="round" stroke-linecap="round"/>
<polyline points="2896.0,950.0 2890.0,990.0" fill="none" stroke="#ffffff" stroke-width="2.5" stroke-linejoin="round" stroke-linecap="round"/>
<polyline points="2796.0,905.0 2850.0,905.0" fill="none" stroke="#ffffff" stroke-width="2.5" stroke-linejoin="round" stroke-linecap="round"/>
<polyline points="2796.0,916.0 2850.0,916.0" fill="none" stroke="#ffffff" stroke-width="2.5" stroke-linejoin="round" stroke-linecap="round"/>
<polyline points="2796.0,927.0 2850.0,927.0" fill="none" stroke="#ffffff" stroke-width="2.5" stroke-linejoin="round" stroke-linecap="round"/>
<polyline points="2796.0,938.0 2850.0,938.0" fill="none" stroke="#ffffff" stroke-width="2.5" stroke-linejoin="round" stroke-linecap="round"/>
<polyline points="2796.0,949.0 2850.0,949.0" fill="none" stroke="#ffffff" stroke-width="2.5" stroke-linejoin="round" stroke-linecap="round"/>
<polyline points="2796.0,960.0 2850.0,960.0" fill="none" stroke="#ffffff" stroke-width="2.5" stroke-linejoin="round" stroke-linecap="round"/>
<polyline points="2796.0,971.0 2850.0,971.0" fill="none" stroke="#ffffff" stroke-width="2.5" stroke-linejoin="round" stroke-linecap="round"/>
<polyline points="2796.0,982.0 2850.0,982.0" fill="none" stroke="#ffffff" stroke-width="2.5" stroke-linejoin="round" stroke-linecap="round"/>
<polyline points="2700.0,1110.0 2714.0,1160.0" fill="none" stroke="#ffffff" stroke-width="2.5" stroke-linejoin="round" stroke-linecap="round"/>
<polyline points="2718.0,1110.0 2732.0,1160.0" fill="none" stroke="#ffffff" stroke-width="2.5" stroke-linejoin="round" stroke-linecap="round"/>
<polyline points="2736.0,1110.0 2750.0,1160.0" fill="none" stroke="#ffffff" stroke-width="2.5" stroke-linejoin="round" stroke-linecap="round"/>
<polyline points="2754.0,1110.0 2768.0,1160.0" fill="none" stroke="#ffffff" stroke-width="2.5" stroke-linejoin="round" stroke-linecap="round"/>
<polyline points="2772.0,1110.0 2786.0,1160.0" fill="none" stroke="#ffffff" stroke-width="2.5" stroke-linejoin="round" stroke-linecap="round"/>
<polyline points="2790.0,1110.0 2804.0,1160.0" fill="none" stroke="#ffffff" stroke-width="2.5" stroke-linejoin="round" stroke-linecap="round"/>
<polyline points="2808.0,1110.0 2822.0,1160.0" fill="none" stroke="#ffffff" stroke-width="2.5" stroke-linejoin="round" stroke-linecap="round"/>
<polyline points="2826.0,1110.0 2840.0,1160.0" fill="none" stroke="#ffffff" stroke-width="2.5" stroke-linejoin="round" stroke-linecap="round"/>
<polyline points="2844.0,1110.0 2858.0,1160.0" fill="none" stroke="#ffffff" stroke-width="2.5" stroke-linejoin="round" stroke-linecap="round"/>
<polyline points="2690.0,1000.0 2730.0,965.0" fill="none" stroke="#ffffff" stroke-width="2.5" stroke-linejoin="round" stroke-linecap="round"/>
<polyline points="2702.0,1012.0 2742.0,977.0" fill="none" stroke="#ffffff" stroke-width="2.5" stroke-linejoin="round" stroke-linecap="round"/>
<polyline points="2714.0,1024.0 2754.0,989.0" fill="none" stroke="#ffffff" stroke-width="2.5" stroke-linejoin="round" stroke-linecap="round"/>
<polyline points="2726.0,1036.0 2766.0,1001.0" fill="none" stroke="#ffffff" stroke-width="2.5" stroke-linejoin="round" stroke-linecap="round"/>
<polyline points="2738.0,1048.0 2778.0,1013.0" fill="none" stroke="#ffffff" stroke-width="2.5" stroke-linejoin="round" stroke-linecap="round"/>
<polyline points="2750.0,1060.0 2790.0,1025.0" fill="none" stroke="#ffffff" stroke-width="2.5" stroke-linejoin="round" stroke-linecap="round"/>
<polyline points="2700.0,905.0 2735.0,945.0" fill="none" stroke="#ffffff" stroke-width="2.5" stroke-linejoin="round" stroke-linecap="round"/>
<polyline points="2711.0,897.0 2746.0,937.0" fill="none" stroke="#ffffff" stroke-width="2.5" stroke-linejoin="round" stroke-linecap="round"/>
<polyline points="2722.0,889.0 2757.0,929.0" fill="none" stroke="#ffffff" stroke-width="2.5" stroke-linejoin="round" stroke-linecap="round"/>
<polyline points="2733.0,881.0 2768.0,921.0" fill="none" stroke="#ffffff" stroke-width="2.5" stroke-linejoin="round" stroke-linecap="round"/>
<polyline points="2744.0,873.0 2779.0,913.0" fill="none" stroke="#ffffff" stroke-width="2.5" stroke-linejoin="round" stroke-linecap="round"/>
<polyline points="2755.0,865.0 2790.0,905.0" fill="none" stroke="#ffffff" stroke-width="2.5" stroke-linejoin="round" stroke-linecap="round"/>
<polyline points="2668.0,880.0 2740.0,840.0 2780.0,880.0 2860.0,850.0" fill="none" stroke="#ffffff" stroke-width="3" stroke-linejoin="round" stroke-linecap="round"/>
<polyline points="2668.0,1010.0 2720.0,960.0 2750.0,930.0 2775.0,930.0" fill="none" stroke="#ffffff" stroke-width="3" stroke-linejoin="round" stroke-linecap="round"/>
<polyline points="2790.0,1005.0 2860.0,1005.0" fill="none" stroke="#ffffff" stroke-width="5" stroke-linejoin="round" stroke-linecap="round"/>
<polyline points="2700.0,1160.0 2860.0,1190.0" fill="none" stroke="#ffffff" stroke-width="3" stroke-linejoin="round" stroke-linecap="round"/>
<polyline points="2640.0,1200.0 2650.0,1170.0 2700.0,1160.0" fill="none" stroke="#ffffff" stroke-width="3" stroke-linejoin="round" stroke-linecap="round"/>
<polyline points="2625.0,1240.0 2660.0,1250.0 2655.0,1275.0 2640.0,1290.0" fill="none" stroke="#ffffff" stroke-width="3" stroke-linejoin="round" stroke-linecap="round"/>
<polyline points="2660.0,1250.0 2800.0,1290.0" fill="none" stroke="#ffffff" stroke-width="3" stroke-linejoin="round" stroke-linecap="round"/>
<polyline points="2290.0,236.0 2215.0,262.0 2205.0,282.0 2228.0,305.0 2290.0,298.0 2296.0,262.0" fill="none" stroke="#ffffff" stroke-width="3.5" stroke-linejoin="round" stroke-linecap="round"/>
<polyline points="1920.0,273.0 2005.0,270.0" fill="none" stroke="#ffffff" stroke-width="3" stroke-linejoin="round" stroke-linecap="round"/>
<polyline points="1966.0,224.0 1975.0,340.0" fill="none" stroke="#ffffff" stroke-width="3" stroke-linejoin="round" stroke-linecap="round"/>
<polyline points="1930.0,330.0 2020.0,326.0" fill="none" stroke="#ffffff" stroke-width="3" stroke-linejoin="round" stroke-linecap="round"/>
<polyline points="1440.0,240.0 1470.0,240.0" fill="none" stroke="#ffffff" stroke-width="3" stroke-linejoin="round" stroke-linecap="round"/>
<polyline points="1480.0,252.0 1540.0,252.0 1540.0,270.0 1480.0,270.0" fill="none" stroke="#ffffff" stroke-width="3" stroke-linejoin="round" stroke-linecap="round"/>
<polyline points="1480.0,333.0 1560.0,333.0" fill="none" stroke="#ffffff" stroke-width="3" stroke-linejoin="round" stroke-linecap="round"/>
<polyline points="1547.0,291.0 1560.0,340.0 1603.0,344.0" fill="none" stroke="#ffffff" stroke-width="3" stroke-linejoin="round" stroke-linecap="round"/>
<polyline points="1621.0,268.0 1655.0,268.0 1656.0,290.0" fill="none" stroke="#ffffff" stroke-width="3" stroke-linejoin="round" stroke-linecap="round"/>
<polyline points="1621.0,291.0 1740.0,291.0" fill="none" stroke="#ffffff" stroke-width="3" stroke-linejoin="round" stroke-linecap="round"/>
<polyline points="1621.0,332.0 1650.0,332.0 1650.0,352.0" fill="none" stroke="#ffffff" stroke-width="3" stroke-linejoin="round" stroke-linecap="round"/>
<polyline points="1668.0,300.0 1668.0,348.0" fill="none" stroke="#ffffff" stroke-width="3" stroke-linejoin="round" stroke-linecap="round"/>
<polyline points="1694.0,312.0 1694.0,348.0" fill="none" stroke="#ffffff" stroke-width="3" stroke-linejoin="round" stroke-linecap="round"/>
<polyline points="1160.0,310.0 1160.0,350.0 1310.0,350.0" fill="none" stroke="#ffffff" stroke-width="3" stroke-linejoin="round" stroke-linecap="round"/>
<polyline points="1178.0,300.0 1178.0,348.0" fill="none" stroke="#ffffff" stroke-width="2.5" stroke-linejoin="round" stroke-linecap="round"/>
<polyline points="1196.0,300.0 1196.0,348.0" fill="none" stroke="#ffffff" stroke-width="2.5" stroke-linejoin="round" stroke-linecap="round"/>
<polyline points="1214.0,300.0 1214.0,348.0" fill="none" stroke="#ffffff" stroke-width="2.5" stroke-linejoin="round" stroke-linecap="round"/>
<polyline points="1232.0,300.0 1232.0,348.0" fill="none" stroke="#ffffff" stroke-width="2.5" stroke-linejoin="round" stroke-linecap="round"/>
<polyline points="1250.0,300.0 1250.0,348.0" fill="none" stroke="#ffffff" stroke-width="2.5" stroke-linejoin="round" stroke-linecap="round"/>
<polyline points="1268.0,300.0 1268.0,348.0" fill="none" stroke="#ffffff" stroke-width="2.5" stroke-linejoin="round" stroke-linecap="round"/>
<polyline points="1286.0,300.0 1286.0,348.0" fill="none" stroke="#ffffff" stroke-width="2.5" stroke-linejoin="round" stroke-linecap="round"/>
<polyline points="985.0,333.0 1040.0,333.0 1040.0,372.0" fill="none" stroke="#ffffff" stroke-width="3.5" stroke-linejoin="round" stroke-linecap="round"/>
<polyline points="1000.0,250.0 1058.0,250.0 1058.0,297.0" fill="none" stroke="#ffffff" stroke-width="3" stroke-linejoin="round" stroke-linecap="round"/>
<polyline points="1560.0,1230.0 1590.0,1255.0 1640.0,1222.0" fill="none" stroke="#ffffff" stroke-width="3" stroke-linejoin="round" stroke-linecap="round"/>
<polyline points="1640.0,1185.0 1700.0,1240.0" fill="none" stroke="#ffffff" stroke-width="3" stroke-linejoin="round" stroke-linecap="round"/>
<polyline points="1990.0,1240.0 1960.0,1262.0" fill="none" stroke="#ffffff" stroke-width="2.5" stroke-linejoin="round" stroke-linecap="round"/>
<polyline points="985.0,297.0 1133.0,297.0" fill="none" stroke="#d4d2cf" stroke-width="9.0" stroke-linejoin="round" stroke-linecap="butt"/>
<polyline points="1139.0,293.0 1330.0,291.0 1548.0,291.0" fill="none" stroke="#d4d2cf" stroke-width="9.0" stroke-linejoin="round" stroke-linecap="butt"/>
<polyline points="1133.0,224.0 1133.0,374.0" fill="none" stroke="#d4d2cf" stroke-width="13.0" stroke-linejoin="round" stroke-linecap="butt"/>
<polyline points="1331.0,224.0 1353.0,341.0 1358.0,374.0" fill="none" stroke="#d4d2cf" stroke-width="18.0" stroke-linejoin="round" stroke-linecap="butt"/>
<polyline points="1475.0,224.0 1475.0,374.0" fill="none" stroke="#d4d2cf" stroke-width="13.0" stroke-linejoin="round" stroke-linecap="butt"/>
<polyline points="1613.0,224.0 1613.0,368.0" fill="none" stroke="#d4d2cf" stroke-width="18.0" stroke-linejoin="round" stroke-linecap="butt"/>
<polyline points="1283.0,392.0 1287.0,412.0 1306.0,451.0 1316.0,470.0 1395.0,528.0 1420.0,541.0 1543.0,634.0 1562.0,647.0 1651.0,710.0 1690.0,742.0" fill="none" stroke="#d4d2cf" stroke-width="11.0" stroke-linejoin="round" stroke-linecap="butt"/>
<polyline points="1198.6,712.5 1438.0,486.7" fill="none" stroke="#d4d2cf" stroke-width="11.0" stroke-linejoin="round" stroke-linecap="butt"/>
<polyline points="1485.0,585.5 1546.0,535.0" fill="none" stroke="#d4d2cf" stroke-width="11.0" stroke-linejoin="round" stroke-linecap="butt"/>
<polyline points="1290.0,842.0 1303.0,833.0 1445.0,730.0 1528.0,662.0 1626.0,580.0" fill="none" stroke="#d4d2cf" stroke-width="16.0" stroke-linejoin="round" stroke-linecap="butt"/>
<polyline points="1651.0,710.0 1720.0,652.0" fill="none" stroke="#d4d2cf" stroke-width="11.0" stroke-linejoin="round" stroke-linecap="butt"/>
<polyline points="1571.0,588.0 1545.0,612.0" fill="none" stroke="#d4d2cf" stroke-width="7.0" stroke-linejoin="round" stroke-linecap="butt"/>
<polyline points="1600.0,562.0 1626.6,584.4 1708.0,651.0 1783.6,709.7 1831.7,752.0 1885.5,800.0 1910.0,822.0" fill="none" stroke="#d4d2cf" stroke-width="19.0" stroke-linejoin="round" stroke-linecap="butt"/>
<polyline points="1787.0,860.0 1876.0,794.0 1962.0,752.0 1990.0,740.0" fill="none" stroke="#d4d2cf" stroke-width="17.0" stroke-linejoin="round" stroke-linecap="butt"/>
<polyline points="1430.0,1172.0 1444.0,1186.6 1742.0,1475.0 1750.0,1483.0" fill="none" stroke="#d4d2cf" stroke-width="16.0" stroke-linejoin="round" stroke-linecap="butt"/>
<polyline points="1830.0,1150.0 1847.0,1167.0 1960.0,1282.0 2166.0,1474.0 2175.0,1483.0" fill="none" stroke="#d4d2cf" stroke-width="14.0" stroke-linejoin="round" stroke-linecap="butt"/>
<polyline points="2084.0,1157.0 2284.0,1272.0" fill="none" stroke="#d4d2cf" stroke-width="11.0" stroke-linejoin="round" stroke-linecap="butt"/>
<polyline points="2228.0,1149.0 2300.0,1213.0" fill="none" stroke="#d4d2cf" stroke-width="11.0" stroke-linejoin="round" stroke-linecap="butt"/>
<polyline points="1951.0,1171.0 2132.0,1269.0" fill="none" stroke="#d4d2cf" stroke-width="11.0" stroke-linejoin="round" stroke-linecap="butt"/>
<polyline points="1522.0,1243.0 1608.0,1187.0 1640.0,1166.0" fill="none" stroke="#d4d2cf" stroke-width="11.0" stroke-linejoin="round" stroke-linecap="butt"/>
<polyline points="1571.0,1306.0 1697.0,1226.0 1790.0,1168.0 1810.0,1155.0" fill="none" stroke="#d4d2cf" stroke-width="14.0" stroke-linejoin="round" stroke-linecap="butt"/>
<polyline points="1470.0,1484.0 1483.0,1475.0 1634.0,1365.0 1727.0,1306.0 1960.0,1165.0 1985.0,1150.0" fill="none" stroke="#d4d2cf" stroke-width="14.0" stroke-linejoin="round" stroke-linecap="butt"/>
<polyline points="1800.0,1482.0 1810.0,1475.0 1864.0,1443.0 1900.0,1421.0 2020.0,1336.0 2193.0,1226.5" fill="none" stroke="#d4d2cf" stroke-width="14.0" stroke-linejoin="round" stroke-linecap="butt"/>
<polyline points="2197.0,1484.0 2201.0,1474.0 2286.0,1280.0 2315.5,1200.0 2331.5,1144.0 2336.0,1125.0" fill="none" stroke="#d4d2cf" stroke-width="25.0" stroke-linejoin="round" stroke-linecap="butt"/>
<polyline points="2460.0,1189.0 2419.5,1218.5 2401.0,1280.0 2387.5,1386.0 2379.5,1474.0 2379.0,1484.0" fill="none" stroke="#d4d2cf" stroke-width="11.0" stroke-linejoin="round" stroke-linecap="butt"/>
<polyline points="2440.0,1204.0 2474.0,1180.0 2518.0,1158.0 2552.5,1145.0 2600.0,1136.0 2665.0,1131.0 2704.0,1100.0" fill="none" stroke="#d4d2cf" stroke-width="11.0" stroke-linejoin="round" stroke-linecap="butt"/>
<polyline points="1951.0,1171.0 1990.0,1195.0 1985.0,1210.0" fill="none" stroke="#d4d2cf" stroke-width="7.0" stroke-linejoin="round" stroke-linecap="butt"/>
<polyline points="2739.0,224.0 2686.0,480.0 2676.0,560.0 2676.0,618.0" fill="none" stroke="#d4d2cf" stroke-width="16.0" stroke-linejoin="round" stroke-linecap="butt"/>
<polyline points="2824.6,224.0 2803.4,258.5 2784.0,339.0 2774.5,362.4 2720.6,362.4" fill="none" stroke="#d4d2cf" stroke-width="11.0" stroke-linejoin="round" stroke-linecap="butt"/>
<polyline points="2670.6,372.0 2703.0,372.0" fill="none" stroke="#d4d2cf" stroke-width="9.0" stroke-linejoin="round" stroke-linecap="butt"/>
<polyline points="2801.5,297.0 2860.0,327.8" fill="none" stroke="#d4d2cf" stroke-width="11.0" stroke-linejoin="round" stroke-linecap="butt"/>
<polyline points="2657.0,255.6 2616.7,308.5" fill="none" stroke="#d4d2cf" stroke-width="11.0" stroke-linejoin="round" stroke-linecap="round"/>
<polyline points="2545.5,224.0 2512.8,314.0" fill="none" stroke="#d4d2cf" stroke-width="11.0" stroke-linejoin="round" stroke-linecap="butt"/>
<polyline points="2838.0,224.8 2866.0,236.0" fill="none" stroke="#d4d2cf" stroke-width="11.0" stroke-linejoin="round" stroke-linecap="butt"/>
<polyline points="2670.0,724.0 2796.0,669.0 2866.0,649.0" fill="none" stroke="#d4d2cf" stroke-width="11.0" stroke-linejoin="round" stroke-linecap="butt"/>
<polyline points="2796.0,669.0 2831.0,606.0" fill="none" stroke="#d4d2cf" stroke-width="11.0" stroke-linejoin="round" stroke-linecap="round"/>
<polyline points="2668.0,1106.0 2761.0,1002.0 2780.6,928.8 2789.0,881.0" fill="none" stroke="#d4d2cf" stroke-width="11.0" stroke-linejoin="round" stroke-linecap="butt"/>
<polyline points="2791.6,1391.0 2866.0,1391.0" fill="none" stroke="#d4d2cf" stroke-width="11.0" stroke-linejoin="round" stroke-linecap="butt"/>
<polyline points="2763.5,1439.0 2866.0,1439.0" fill="none" stroke="#d4d2cf" stroke-width="11.0" stroke-linejoin="round" stroke-linecap="butt"/>
<polyline points="2193.0,224.8 2160.6,268.0 2158.6,287.4 2187.5,325.8 2305.0,325.0" fill="none" stroke="#d4d2cf" stroke-width="11.0" stroke-linejoin="round" stroke-linecap="butt"/>
<polyline points="950.0,996.0 1034.0,980.0 1120.0,982.0 1176.0,1004.0 1226.0,1040.0 1256.0,1084.0 1272.0,1120.0 1284.0,1160.0 1288.0,1230.0 1284.0,1250.0" fill="none" stroke="#d4d2cf" stroke-width="11.0" stroke-linejoin="round" stroke-linecap="butt"/>
<polyline points="950.0,1271.0 1080.0,1271.0 1178.0,1348.0" fill="none" stroke="#d4d2cf" stroke-width="11.0" stroke-linejoin="round" stroke-linecap="butt"/>
<polyline points="1072.0,1271.0 1072.0,1455.0 1064.0,1467.0 996.0,1468.0 992.0,1460.0 992.0,1370.0 985.0,1360.0 950.0,1358.0" fill="none" stroke="#d4d2cf" stroke-width="11.0" stroke-linejoin="round" stroke-linecap="butt"/>
<polyline points="996.0,1392.0 1068.0,1392.0" fill="none" stroke="#d4d2cf" stroke-width="11.0" stroke-linejoin="round" stroke-linecap="butt"/>
<polyline points="1194.0,1362.0 1280.0,1394.0 1296.0,1420.0 1306.0,1476.0 1307.0,1484.0" fill="none" stroke="#d4d2cf" stroke-width="11.0" stroke-linejoin="round" stroke-linecap="butt"/>
<polyline points="985.0,297.0 1133.0,297.0" fill="none" stroke="#ffffff" stroke-width="6" stroke-linejoin="round" stroke-linecap="butt"/>
<polyline points="1139.0,293.0 1330.0,291.0 1548.0,291.0" fill="none" stroke="#ffffff" stroke-width="6" stroke-linejoin="round" stroke-linecap="butt"/>
<polyline points="1133.0,224.0 1133.0,374.0" fill="none" stroke="#ffffff" stroke-width="10" stroke-linejoin="round" stroke-linecap="butt"/>
<polyline points="1331.0,224.0 1353.0,341.0 1358.0,374.0" fill="none" stroke="#ffffff" stroke-width="15" stroke-linejoin="round" stroke-linecap="butt"/>
<polyline points="1475.0,224.0 1475.0,374.0" fill="none" stroke="#ffffff" stroke-width="10" stroke-linejoin="round" stroke-linecap="butt"/>
<polyline points="1613.0,224.0 1613.0,368.0" fill="none" stroke="#ffffff" stroke-width="15" stroke-linejoin="round" stroke-linecap="butt"/>
<polyline points="1283.0,392.0 1287.0,412.0 1306.0,451.0 1316.0,470.0 1395.0,528.0 1420.0,541.0 1543.0,634.0 1562.0,647.0 1651.0,710.0 1690.0,742.0" fill="none" stroke="#ffffff" stroke-width="8" stroke-linejoin="round" stroke-linecap="butt"/>
<polyline points="1198.6,712.5 1438.0,486.7" fill="none" stroke="#ffffff" stroke-width="8" stroke-linejoin="round" stroke-linecap="butt"/>
<polyline points="1485.0,585.5 1546.0,535.0" fill="none" stroke="#ffffff" stroke-width="8" stroke-linejoin="round" stroke-linecap="butt"/>
<polyline points="1290.0,842.0 1303.0,833.0 1445.0,730.0 1528.0,662.0 1626.0,580.0" fill="none" stroke="#ffffff" stroke-width="13" stroke-linejoin="round" stroke-linecap="butt"/>
<polyline points="1651.0,710.0 1720.0,652.0" fill="none" stroke="#ffffff" stroke-width="8" stroke-linejoin="round" stroke-linecap="butt"/>
<polyline points="1571.0,588.0 1545.0,612.0" fill="none" stroke="#ffffff" stroke-width="4" stroke-linejoin="round" stroke-linecap="butt"/>
<polyline points="1600.0,562.0 1626.6,584.4 1708.0,651.0 1783.6,709.7 1831.7,752.0 1885.5,800.0 1910.0,822.0" fill="none" stroke="#ffffff" stroke-width="16" stroke-linejoin="round" stroke-linecap="butt"/>
<polyline points="1787.0,860.0 1876.0,794.0 1962.0,752.0 1990.0,740.0" fill="none" stroke="#ffffff" stroke-width="14" stroke-linejoin="round" stroke-linecap="butt"/>
<polyline points="1430.0,1172.0 1444.0,1186.6 1742.0,1475.0 1750.0,1483.0" fill="none" stroke="#ffffff" stroke-width="13" stroke-linejoin="round" stroke-linecap="butt"/>
<polyline points="1830.0,1150.0 1847.0,1167.0 1960.0,1282.0 2166.0,1474.0 2175.0,1483.0" fill="none" stroke="#ffffff" stroke-width="11" stroke-linejoin="round" stroke-linecap="butt"/>
<polyline points="2084.0,1157.0 2284.0,1272.0" fill="none" stroke="#ffffff" stroke-width="8" stroke-linejoin="round" stroke-linecap="butt"/>
<polyline points="2228.0,1149.0 2300.0,1213.0" fill="none" stroke="#ffffff" stroke-width="8" stroke-linejoin="round" stroke-linecap="butt"/>
<polyline points="1951.0,1171.0 2132.0,1269.0" fill="none" stroke="#ffffff" stroke-width="8" stroke-linejoin="round" stroke-linecap="butt"/>
<polyline points="1522.0,1243.0 1608.0,1187.0 1640.0,1166.0" fill="none" stroke="#ffffff" stroke-width="8" stroke-linejoin="round" stroke-linecap="butt"/>
<polyline points="1571.0,1306.0 1697.0,1226.0 1790.0,1168.0 1810.0,1155.0" fill="none" stroke="#ffffff" stroke-width="11" stroke-linejoin="round" stroke-linecap="butt"/>
<polyline points="1470.0,1484.0 1483.0,1475.0 1634.0,1365.0 1727.0,1306.0 1960.0,1165.0 1985.0,1150.0" fill="none" stroke="#ffffff" stroke-width="11" stroke-linejoin="round" stroke-linecap="butt"/>
<polyline points="1800.0,1482.0 1810.0,1475.0 1864.0,1443.0 1900.0,1421.0 2020.0,1336.0 2193.0,1226.5" fill="none" stroke="#ffffff" stroke-width="11" stroke-linejoin="round" stroke-linecap="butt"/>
<polyline points="2197.0,1484.0 2201.0,1474.0 2286.0,1280.0 2315.5,1200.0 2331.5,1144.0 2336.0,1125.0" fill="none" stroke="#ffffff" stroke-width="22" stroke-linejoin="round" stroke-linecap="butt"/>
<polyline points="2460.0,1189.0 2419.5,1218.5 2401.0,1280.0 2387.5,1386.0 2379.5,1474.0 2379.0,1484.0" fill="none" stroke="#ffffff" stroke-width="8" stroke-linejoin="round" stroke-linecap="butt"/>
<polyline points="2440.0,1204.0 2474.0,1180.0 2518.0,1158.0 2552.5,1145.0 2600.0,1136.0 2665.0,1131.0 2704.0,1100.0" fill="none" stroke="#ffffff" stroke-width="8" stroke-linejoin="round" stroke-linecap="butt"/>
<polyline points="1951.0,1171.0 1990.0,1195.0 1985.0,1210.0" fill="none" stroke="#ffffff" stroke-width="4" stroke-linejoin="round" stroke-linecap="butt"/>
<polyline points="2739.0,224.0 2686.0,480.0 2676.0,560.0 2676.0,618.0" fill="none" stroke="#ffffff" stroke-width="13" stroke-linejoin="round" stroke-linecap="butt"/>
<polyline points="2824.6,224.0 2803.4,258.5 2784.0,339.0 2774.5,362.4 2720.6,362.4" fill="none" stroke="#ffffff" stroke-width="8" stroke-linejoin="round" stroke-linecap="butt"/>
<polyline points="2670.6,372.0 2703.0,372.0" fill="none" stroke="#ffffff" stroke-width="6" stroke-linejoin="round" stroke-linecap="butt"/>
<polyline points="2801.5,297.0 2860.0,327.8" fill="none" stroke="#ffffff" stroke-width="8" stroke-linejoin="round" stroke-linecap="butt"/>
<polyline points="2657.0,255.6 2616.7,308.5" fill="none" stroke="#ffffff" stroke-width="8" stroke-linejoin="round" stroke-linecap="round"/>
<polyline points="2545.5,224.0 2512.8,314.0" fill="none" stroke="#ffffff" stroke-width="8" stroke-linejoin="round" stroke-linecap="butt"/>
<polyline points="2838.0,224.8 2866.0,236.0" fill="none" stroke="#ffffff" stroke-width="8" stroke-linejoin="round" stroke-linecap="butt"/>
<polyline points="2670.0,724.0 2796.0,669.0 2866.0,649.0" fill="none" stroke="#ffffff" stroke-width="8" stroke-linejoin="round" stroke-linecap="butt"/>
<polyline points="2796.0,669.0 2831.0,606.0" fill="none" stroke="#ffffff" stroke-width="8" stroke-linejoin="round" stroke-linecap="round"/>
<polyline points="2668.0,1106.0 2761.0,1002.0 2780.6,928.8 2789.0,881.0" fill="none" stroke="#ffffff" stroke-width="8" stroke-linejoin="round" stroke-linecap="butt"/>
<polyline points="2791.6,1391.0 2866.0,1391.0" fill="none" stroke="#ffffff" stroke-width="8" stroke-linejoin="round" stroke-linecap="butt"/>
<polyline points="2763.5,1439.0 2866.0,1439.0" fill="none" stroke="#ffffff" stroke-width="8" stroke-linejoin="round" stroke-linecap="butt"/>
<polyline points="2193.0,224.8 2160.6,268.0 2158.6,287.4 2187.5,325.8 2305.0,325.0" fill="none" stroke="#ffffff" stroke-width="8" stroke-linejoin="round" stroke-linecap="butt"/>
<polyline points="950.0,996.0 1034.0,980.0 1120.0,982.0 1176.0,1004.0 1226.0,1040.0 1256.0,1084.0 1272.0,1120.0 1284.0,1160.0 1288.0,1230.0 1284.0,1250.0" fill="none" stroke="#ffffff" stroke-width="8" stroke-linejoin="round" stroke-linecap="butt"/>
<polyline points="950.0,1271.0 1080.0,1271.0 1178.0,1348.0" fill="none" stroke="#ffffff" stroke-width="8" stroke-linejoin="round" stroke-linecap="butt"/>
<polyline points="1072.0,1271.0 1072.0,1455.0 1064.0,1467.0 996.0,1468.0 992.0,1460.0 992.0,1370.0 985.0,1360.0 950.0,1358.0" fill="none" stroke="#ffffff" stroke-width="8" stroke-linejoin="round" stroke-linecap="butt"/>
<polyline points="996.0,1392.0 1068.0,1392.0" fill="none" stroke="#ffffff" stroke-width="8" stroke-linejoin="round" stroke-linecap="butt"/>
<polyline points="1194.0,1362.0 1280.0,1394.0 1296.0,1420.0 1306.0,1476.0 1307.0,1484.0" fill="none" stroke="#ffffff" stroke-width="8" stroke-linejoin="round" stroke-linecap="butt"/>
<polyline points="2201.0,1474.0 2286.0,1280.0 2315.5,1200.0 2331.5,1144.0" fill="none" stroke="#cfcdca" stroke-width="2" />
<circle cx="1978.6" cy="1222.6" r="12" fill="none" stroke="#fff" stroke-width="6"/>
<circle cx="1014" cy="402" r="8" fill="none" stroke="#fff" stroke-width="3.5"/>
<polyline points="985.0,222.0 978.0,278.0 971.0,355.0 966.0,384.0" fill="none" stroke="#f3a58f" stroke-width="25.0" stroke-linejoin="round" stroke-linecap="butt"/>
<polyline points="985.0,222.0 978.0,278.0 971.0,355.0 966.0,384.0" fill="none" stroke="#fcd884" stroke-width="20" stroke-linejoin="round" stroke-linecap="butt"/>
<polyline points="958.0,382.0 1420.0,382.0" fill="none" stroke="#f39a88" stroke-width="18" stroke-linejoin="round" stroke-linecap="butt"/>
<polyline points="2866.0,385.0 2805.0,478.0 2746.0,561.0 2690.0,631.0 2655.0,672.0" fill="none" stroke="#f39a88" stroke-width="28" stroke-linejoin="round" stroke-linecap="butt"/>
<polyline points="2560.0,1108.0 2569.0,1134.0 2684.0,1476.0 2688.0,1486.0" fill="none" stroke="#f0907e" stroke-width="23" stroke-linejoin="round" stroke-linecap="butt"/>
<polyline points="958.0,382.0 1420.0,382.0" fill="none" stroke="#faad98" stroke-width="16" stroke-linejoin="round" stroke-linecap="butt"/>
<polyline points="2866.0,385.0 2805.0,478.0 2746.0,561.0 2690.0,631.0 2655.0,672.0" fill="none" stroke="#faad98" stroke-width="26" stroke-linejoin="round" stroke-linecap="butt"/>
<polyline points="2560.0,1108.0 2569.0,1134.0 2684.0,1476.0 2688.0,1486.0" fill="none" stroke="#faad98" stroke-width="21" stroke-linejoin="round" stroke-linecap="butt"/>
<polygon points="985.0,330.0 992.0,360.0 1012.0,374.0 985.0,374.0" fill="#faad98" />
<polyline points="966.0,386.0 969.0,394.0 971.4,429.0 977.8,458.8 991.0,488.4 1009.6,518.0 1030.0,547.6 1041.8,562.6 1104.0,626.2 1187.7,713.6 1257.7,786.6 1313.2,853.2 1357.7,908.7 1402.0,955.4 1439.8,997.6 1500.0,1062.0" fill="none" stroke="#c2a860" stroke-width="16.7" stroke-linejoin="round" stroke-linecap="butt"/>
<polyline points="1440.0,1186.0 1357.0,1210.0 1320.0,1216.0" fill="none" stroke="#4a4038" stroke-width="19" stroke-linejoin="round" stroke-linecap="butt"/>
<polyline points="1520.0,1165.0 1440.0,1186.0 1357.0,1210.0 1320.0,1216.0 1284.0,1240.0 1268.0,1270.0 1248.0,1296.0 1216.0,1326.0 1190.0,1350.0 1178.0,1380.0 1170.0,1420.0 1170.0,1484.0" fill="none" stroke="#c2a860" stroke-width="18.0" stroke-linejoin="round" stroke-linecap="butt"/>
<polyline points="1596.0,1158.0 1615.0,1177.0 1910.0,1475.0 1920.0,1485.0" fill="none" stroke="#c2a860" stroke-width="17.0" stroke-linejoin="round" stroke-linecap="butt"/>
<polyline points="2015.5,218.0 2040.5,337.0 2046.0,366.0" fill="none" stroke="#d9b88a" stroke-width="34.0" stroke-linejoin="round" stroke-linecap="butt"/>
<polyline points="966.0,386.0 969.0,394.0 971.4,429.0 977.8,458.8 991.0,488.4 1009.6,518.0 1030.0,547.6 1041.8,562.6 1104.0,626.2 1187.7,713.6 1257.7,786.6 1313.2,853.2 1357.7,908.7 1402.0,955.4 1439.8,997.6 1500.0,1062.0" fill="none" stroke="#f6f7b9" stroke-width="13.5" stroke-linejoin="round" stroke-linecap="butt"/>
<polyline points="1440.0,1186.0 1357.0,1210.0 1320.0,1216.0" fill="none" stroke="#f6f7b9" stroke-width="15" stroke-linejoin="round" stroke-linecap="butt"/>
<polyline points="1520.0,1165.0 1440.0,1186.0 1357.0,1210.0 1320.0,1216.0 1284.0,1240.0 1268.0,1270.0 1248.0,1296.0 1216.0,1326.0 1190.0,1350.0 1178.0,1380.0 1170.0,1420.0 1170.0,1484.0" fill="none" stroke="#f6f7b9" stroke-width="15" stroke-linejoin="round" stroke-linecap="butt"/>
<polyline points="1596.0,1158.0 1615.0,1177.0 1910.0,1475.0 1920.0,1485.0" fill="none" stroke="#f6f7b9" stroke-width="14" stroke-linejoin="round" stroke-linecap="butt"/>
<polyline points="2015.5,218.0 2040.5,337.0 2046.0,366.0" fill="none" stroke="#f6f7b9" stroke-width="31" stroke-linejoin="round" stroke-linecap="butt"/>
<polyline points="2000.0,222.0 2025.0,339.0" fill="none" stroke="#f3a090" stroke-width="3" />
<polyline points="2046.0,226.0 2075.0,332.0" fill="none" stroke="#8aa6c8" stroke-width="2.5" />
<polygon points="2700.0,612.0 2745.0,590.0 2860.0,558.0 2860.0,594.0 2745.0,618.0 2705.0,632.0" fill="#f6f7b9" stroke="#c8b070" stroke-width="1"/>
<polygon points="2668.0,620.0 2705.0,612.0 2712.0,640.0 2668.0,690.0" fill="#faad98" />
<polyline points="1351.0,917.0 1395.0,963.0 1470.0,1046.0" fill="none" stroke="#4a4038" stroke-width="1.8" />
<polyline points="1365.0,902.0 1409.0,949.0 1480.0,1028.0" fill="none" stroke="#4a4038" stroke-width="1.8" />
<polyline points="1729.5,679.1 1778.0,717.0 1826.5,759.1" fill="none" stroke="#4a4038" stroke-width="1.7" />
<polyline points="1740.5,664.9 1789.0,702.5 1837.5,744.9" fill="none" stroke="#4a4038" stroke-width="1.7" />
<polyline points="2866.0,1120.0 2845.0,1184.0 2828.0,1269.0 2800.0,1353.0 2772.0,1409.0 2735.0,1454.0 2712.0,1480.0" fill="none" stroke="#777" stroke-width="3.2" />
<polyline points="2866.0,1120.0 2845.0,1184.0 2828.0,1269.0 2800.0,1353.0 2772.0,1409.0 2735.0,1454.0 2712.0,1480.0" fill="none" stroke="#e8e8e8" stroke-width="1.2" stroke-dasharray="10 10"/>
<polyline points="2670.0,787.0 2860.0,686.5" fill="none" stroke="#a9a9a9" stroke-width="2" stroke-dasharray="14 6"/>
<polyline points="2665.0,1347.0 2679.0,1387.0 2693.0,1426.0 2710.0,1457.0 2736.0,1478.0" fill="none" stroke="#a5d5e5" stroke-width="3.5" />
<polyline points="2280.0,325.0 2330.0,300.0 2399.0,261.0 2440.0,244.0" fill="none" stroke="#c8a838" stroke-width="2.5" stroke-dasharray="10 12"/>
<polyline points="1442.0,1262.0 1470.0,1340.0 1500.0,1400.0 1545.0,1470.0" fill="none" stroke="#bdbbb8" stroke-width="2" />
<polyline points="1450.0,1262.0 1485.0,1340.0 1520.0,1410.0 1552.0,1470.0" fill="none" stroke="#bdbbb8" stroke-width="2" />
<polyline points="1196.0,735.0 1220.0,773.0 1215.0,845.0 1214.0,846.0 1260.0,900.0 1300.0,960.0 1330.0,1010.0" fill="none" stroke="#9aa9a0" stroke-width="1.5" />
<polyline points="1419.6,1230.0 1419.6,1300.0 1427.6,1366.0 1435.6,1425.0 1445.0,1478.0" fill="none" stroke="#b5b3b0" stroke-width="1.5" />
<polyline points="2590.0,1150.0 2622.0,1259.0 2638.0,1305.0 2676.0,1415.0 2695.0,1478.0" fill="none" stroke="#aaa" stroke-width="1.5" />
<rect x="964.0" y="502.0" width="8" height="8" fill="#d8d8d8" stroke="#8a8a8a" stroke-width="1.5"/>
<rect x="989.0" y="536.0" width="8" height="8" fill="#d8d8d8" stroke="#8a8a8a" stroke-width="1.5"/>
<rect x="1029.0" y="565.0" width="8" height="8" fill="#d8d8d8" stroke="#8a8a8a" stroke-width="1.5"/>
<rect x="1065.0" y="601.0" width="8" height="8" fill="#d8d8d8" stroke="#8a8a8a" stroke-width="1.5"/>
<rect x="1110.0" y="650.0" width="8" height="8" fill="#d8d8d8" stroke="#8a8a8a" stroke-width="1.5"/>
<rect x="1150.0" y="687.0" width="8" height="8" fill="#d8d8d8" stroke="#8a8a8a" stroke-width="1.5"/>
<rect x="1192.0" y="731.0" width="8" height="8" fill="#d8d8d8" stroke="#8a8a8a" stroke-width="1.5"/>
<rect x="1216.0" y="769.0" width="8" height="8" fill="#d8d8d8" stroke="#8a8a8a" stroke-width="1.5"/>
<rect x="1211.0" y="841.0" width="8" height="8" fill="#d8d8d8" stroke="#8a8a8a" stroke-width="1.5"/>
<rect x="1326.0" y="1038.0" width="8" height="8" fill="#d8d8d8" stroke="#8a8a8a" stroke-width="1.5"/>
<rect x="1415.6" y="1296.0" width="8" height="8" fill="#d8d8d8" stroke="#8a8a8a" stroke-width="1.5"/>
<rect x="1423.6" y="1362.0" width="8" height="8" fill="#d8d8d8" stroke="#8a8a8a" stroke-width="1.5"/>
<rect x="1431.6" y="1421.0" width="8" height="8" fill="#d8d8d8" stroke="#8a8a8a" stroke-width="1.5"/>
<rect x="2618.0" y="1255.0" width="8" height="8" fill="#d8d8d8" stroke="#8a8a8a" stroke-width="1.5"/>
<rect x="2634.0" y="1301.0" width="8" height="8" fill="#d8d8d8" stroke="#8a8a8a" stroke-width="1.5"/>
<rect x="2672.0" y="1411.0" width="8" height="8" fill="#d8d8d8" stroke="#8a8a8a" stroke-width="1.5"/>
<rect x="2070.0" y="326.0" width="8" height="8" fill="#d8d8d8" stroke="#8a8a8a" stroke-width="1.5"/>
<polyline points="964.0,528.0 1031.0,594.0 1100.0,665.0 1180.0,747.0 1215.0,790.0 1280.0,860.0 1330.0,900.0 1345.0,905.0" fill="none" stroke="#4a90d9" stroke-width="2.2" stroke-dasharray="5 6"/>
<polyline points="1345.0,905.0 1380.0,890.0 1440.0,865.0 1520.0,815.0 1600.0,760.0 1660.0,725.0 1745.0,684.0" fill="none" stroke="#4a90d9" stroke-width="2.2" stroke-dasharray="5 6"/>
<polyline points="1380.0,905.0 1460.0,870.0 1545.0,815.0 1620.0,765.0 1700.0,715.0 1750.0,690.0" fill="none" stroke="#4a90d9" stroke-width="2.2" stroke-dasharray="5 6"/>
<polyline points="950.0,1072.0 1000.0,1040.0 1040.0,1018.0 1078.0,1008.0 1110.0,1020.0 1160.0,1060.0 1210.0,1100.0 1250.0,1130.0 1272.0,1148.0" fill="none" stroke="#4a90d9" stroke-width="2.2" stroke-dasharray="5 6"/>
<polyline points="1323.7,1226.0 1335.7,1290.0 1333.7,1370.0 1343.7,1430.0 1339.7,1476.0" fill="none" stroke="#4a90d9" stroke-width="2.2" stroke-dasharray="4 8"/>
<polyline points="1372.0,936.0 1400.0,925.0 1483.0,880.0 1568.0,828.0 1643.0,768.0 1724.0,711.0 1757.0,688.0 1772.0,672.0" fill="none" stroke="#f59a8a" stroke-width="2.2" stroke-dasharray="5 6"/>
<polyline points="1352.0,1040.0 1420.0,1010.0 1500.0,980.0 1580.0,940.0 1650.0,900.0 1730.0,845.0 1790.0,800.0" fill="none" stroke="#f59a8a" stroke-width="2.2" stroke-dasharray="5 6"/>
<polyline points="1246.0,860.0 1290.0,880.0 1310.0,920.0 1330.0,945.0 1365.0,950.0 1395.0,945.0" fill="none" stroke="#f59a8a" stroke-width="2.2" stroke-dasharray="5 6"/>
<polyline points="1290.0,880.0 1320.0,905.0 1345.0,905.0" fill="none" stroke="#f59a8a" stroke-width="2.2" stroke-dasharray="5 6"/>
<polyline points="1170.0,815.0 1125.0,840.0 1140.0,858.0 1165.0,845.0 1215.0,820.0" fill="none" stroke="#f59a8a" stroke-width="2.2" stroke-dasharray="5 6"/>
<polyline points="1240.0,690.0 1235.0,740.0 1260.0,770.0 1290.0,790.0" fill="none" stroke="#f59a8a" stroke-width="2.2" stroke-dasharray="5 6"/>
<polyline points="1290.0,630.0 1320.0,640.0 1360.0,622.0" fill="none" stroke="#f59a8a" stroke-width="2.2" stroke-dasharray="5 6"/>
<polyline points="1400.0,700.0 1430.0,690.0 1450.0,720.0 1420.0,740.0 1380.0,760.0 1340.0,770.0" fill="none" stroke="#f59a8a" stroke-width="2.2" stroke-dasharray="5 6"/>
<polyline points="1430.0,690.0 1470.0,650.0 1520.0,610.0" fill="none" stroke="#f59a8a" stroke-width="2.2" stroke-dasharray="5 6"/>
<polyline points="1440.0,610.0 1480.0,640.0 1510.0,660.0" fill="none" stroke="#f59a8a" stroke-width="2.2" stroke-dasharray="5 6"/>
<polyline points="1725.0,224.0 1760.0,300.0 1770.0,350.0" fill="none" stroke="#f59a8a" stroke-width="2.2" stroke-dasharray="5 6"/>
<polyline points="1862.0,226.0 1900.0,300.0 1912.0,338.0" fill="none" stroke="#f59a8a" stroke-width="2.2" stroke-dasharray="5 6"/>
<polyline points="1873.0,224.0 1915.0,290.0 1925.0,325.0" fill="none" stroke="#f59a8a" stroke-width="2.2" stroke-dasharray="5 6"/>
<polyline points="1922.0,330.0 1930.0,345.0 1975.0,348.0" fill="none" stroke="#f59a8a" stroke-width="2.2" stroke-dasharray="5 6"/>
<polyline points="1769.0,664.0 1772.0,700.0" fill="none" stroke="#f59a8a" stroke-width="2.2" stroke-dasharray="5 6"/>
<polyline points="1846.0,740.0 1880.0,760.0 1895.0,780.0" fill="none" stroke="#f59a8a" stroke-width="2.2" stroke-dasharray="5 6"/>
<polyline points="1790.0,800.0 1840.0,760.0 1870.0,720.0" fill="none" stroke="#f59a8a" stroke-width="2.2" stroke-dasharray="5 6"/>
<polyline points="1798.0,806.0 1800.0,850.0" fill="none" stroke="#f59a8a" stroke-width="2.2" stroke-dasharray="5 6"/>
<polyline points="1809.0,1170.0 1822.0,1195.0 1838.0,1208.0" fill="none" stroke="#f59a8a" stroke-width="2.2" stroke-dasharray="5 6"/>
<polyline points="1540.0,802.0 1640.0,897.0" fill="none" stroke="#9a9a9a" stroke-width="5.5" />
<polyline points="1540.0,802.0 1640.0,897.0" fill="none" stroke="#f4f4f4" stroke-width="3" />
<polyline points="1540.0,802.0 1640.0,897.0" fill="none" stroke="#6aa8ea" stroke-width="3" stroke-dasharray="6 6"/>
<polyline points="1320.0,918.0 1365.0,1020.0" fill="none" stroke="#8a8a8a" stroke-width="6" />
<polyline points="1320.0,918.0 1365.0,1020.0" fill="none" stroke="#f59a8a" stroke-width="3.5" stroke-dasharray="6 5"/>
<polygon points="1004.0,229.0 1034.0,229.0 1034.0,239.0 1004.0,239.0" fill="#d6cec9" />
<polygon points="1060.0,227.0 1081.0,227.0 1081.0,245.0 1060.0,245.0" fill="#d6cec9" />
<polygon points="1102.0,240.0 1124.0,240.0 1124.0,255.0 1102.0,255.0" fill="#d6cec9" />
<polygon points="1146.0,226.0 1165.0,226.0 1165.0,245.0 1146.0,245.0" fill="#d6cec9" />
<polygon points="1191.0,229.0 1280.0,229.0 1280.0,279.0 1191.0,279.0" fill="#d6cec9" />
<polygon points="1071.0,265.0 1098.0,265.0 1098.0,288.0 1071.0,288.0" fill="#d6cec9" />
<polygon points="997.0,271.0 1007.0,271.0 1007.0,285.0 997.0,285.0" fill="#d6cec9" />
<polygon points="991.0,313.0 1020.0,313.0 1020.0,324.0 991.0,324.0" fill="#d6cec9" />
<polygon points="1050.0,310.0 1122.0,310.0 1122.0,367.0 1050.0,367.0" fill="#d6cec9" />
<polygon points="1019.0,340.0 1035.0,340.0 1035.0,370.0 1019.0,370.0" fill="#d6cec9" />
<polygon points="1297.0,316.0 1341.0,316.0 1341.0,367.0 1297.0,367.0" fill="#d6cec9" />
<polygon points="1305.0,256.0 1331.0,256.0 1331.0,280.0 1305.0,280.0" fill="#d6cec9" />
<polygon points="1364.0,329.0 1405.0,329.0 1405.0,343.0 1364.0,343.0" fill="#d6cec9" />
<polygon points="1364.0,300.0 1383.0,300.0 1383.0,312.0 1364.0,312.0" fill="#d6cec9" />
<polygon points="1392.0,302.0 1406.0,302.0 1406.0,314.0 1392.0,314.0" fill="#d6cec9" />
<polygon points="1483.0,225.0 1536.0,225.0 1536.0,234.0 1483.0,234.0" fill="#d6cec9" />
<polygon points="1484.0,236.0 1511.0,236.0 1511.0,245.0 1484.0,245.0" fill="#d6cec9" />
<polygon points="1517.0,249.0 1530.0,249.0 1530.0,267.0 1517.0,267.0" fill="#d6cec9" />
<polygon points="1484.0,275.0 1497.0,275.0 1497.0,286.0 1484.0,286.0" fill="#d6cec9" />
<polygon points="1483.0,296.0 1524.0,296.0 1524.0,315.0 1483.0,315.0" fill="#d6cec9" />
<polygon points="1525.0,311.0 1535.0,311.0 1535.0,327.0 1525.0,327.0" fill="#d6cec9" />
<polygon points="1508.0,336.0 1525.0,336.0 1525.0,358.0 1508.0,358.0" fill="#d6cec9" />
<polygon points="1440.0,325.0 1459.0,325.0 1459.0,340.0 1440.0,340.0" fill="#d6cec9" />
<polygon points="1558.0,344.0 1591.0,344.0 1591.0,355.0 1558.0,355.0" fill="#d6cec9" />
<polygon points="1440.0,345.0 1452.0,345.0 1452.0,360.0 1440.0,360.0" fill="#d6cec9" />
<polygon points="1579.0,225.0 1604.0,225.0 1604.0,240.0 1579.0,240.0" fill="#d6cec9" />
<polygon points="1582.0,243.0 1604.0,243.0 1604.0,258.0 1582.0,258.0" fill="#d6cec9" />
<polygon points="1580.0,260.0 1604.0,260.0 1604.0,272.0 1580.0,272.0" fill="#d6cec9" />
<polygon points="1586.0,274.0 1604.0,274.0 1604.0,282.0 1586.0,282.0" fill="#d6cec9" />
<polygon points="1624.0,226.0 1643.0,226.0 1643.0,237.0 1624.0,237.0" fill="#d6cec9" />
<polygon points="1658.0,266.0 1717.0,266.0 1717.0,284.0 1658.0,284.0" fill="#d6cec9" />
<polygon points="1647.0,295.0 1698.0,295.0 1698.0,311.0 1647.0,311.0" fill="#d6cec9" />
<polygon points="1703.0,320.0 1732.0,320.0 1732.0,345.0 1703.0,345.0" fill="#d6cec9" />
<polygon points="1626.0,340.0 1644.0,340.0 1644.0,348.0 1626.0,348.0" fill="#d6cec9" />
<polygon points="1930.0,228.0 1961.0,228.0 1961.0,252.0 1930.0,252.0" fill="#d6cec9" />
<polygon points="1928.0,287.0 1955.0,287.0 1955.0,316.0 1928.0,316.0" fill="#d6cec9" />
<polygon points="1983.0,294.0 1993.0,294.0 1993.0,314.0 1983.0,314.0" fill="#d6cec9" />
<polygon points="2259.0,305.0 2276.0,305.0 2276.0,314.0 2259.0,314.0" fill="#d6cec9" />
<polygon points="2297.0,264.0 2307.0,264.0 2307.0,282.0 2297.0,282.0" fill="#d6cec9" />
<polygon points="1145.0,335.0 1165.0,335.0 1165.0,347.0 1189.0,350.0 1189.0,364.0 1150.0,364.0 1145.0,350.0" fill="#d6cec9" />
<polygon points="1625.0,243.0 1640.0,243.0 1640.0,250.0 1656.0,250.0 1656.0,259.0 1630.0,259.0 1625.0,252.0" fill="#d6cec9" />
<polygon points="1366.0,226.0 1395.0,226.0 1395.0,236.0 1428.0,232.0 1428.0,244.0 1395.0,250.0 1395.0,278.0 1378.0,278.0 1378.0,250.0 1366.0,246.0" fill="#d6cec9" />
<polygon points="2198.4,247.8 2216.4,235.1 2225.6,248.2 2207.6,260.9" fill="#d6cec9" />
<polygon points="2205.0,268.0 2222.0,260.0 2232.0,270.0 2240.0,268.0 2243.0,280.0 2236.0,284.0 2242.0,293.0 2230.0,297.0" fill="#d6cec9" />
<polygon points="2368.0,224.0 2400.0,224.0 2420.0,228.0 2418.0,245.0 2395.0,246.0 2372.0,238.0" fill="#d6cec9" />
<polygon points="2511.8,305.6 2524.4,287.5 2534.2,294.4 2521.6,312.5" fill="#dcd6d2" />
<polygon points="1038.5,413.0 1183.0,413.0 1183.0,426.0 1190.0,426.0 1190.0,468.0 1137.6,468.0 1137.6,482.5 1129.0,482.5 1133.0,507.7 1127.0,510.6 1127.0,516.6 1106.6,516.6 1106.6,527.0 1084.0,527.0 1084.0,537.0 1069.5,537.0 1069.5,543.0 1038.5,543.0 1038.5,485.5 1003.0,484.0 1003.0,464.7 990.3,461.8 990.3,442.5 1003.0,439.6 1003.0,435.0 1038.5,435.0" fill="#d6cec9" />
<polygon points="1117.8,568.0 1143.8,595.0 1117.8,617.0 1087.0,585.5" fill="#d6cec9" />
<polygon points="1191.0,595.0 1235.0,627.8 1210.0,651.0 1193.0,649.0 1167.0,620.0" fill="#d6cec9" />
<polygon points="1312.0,481.5 1339.0,504.6 1275.6,564.0 1246.8,543.0" fill="#d6cec9" />
<polygon points="1237.0,448.0 1287.0,440.0 1290.0,470.0 1285.0,477.7 1266.0,489.0 1240.0,470.0" fill="#d6cec9" />
<polygon points="1201.0,410.0 1244.0,410.0 1244.0,437.0 1201.0,437.0" fill="#d6cec9" />
<polygon points="1073.6,552.3 1082.8,560.0 1076.4,567.7 1067.2,560.0" fill="#d6cec9" />
<rect x="1074" y="366" width="12" height="53" fill="#e4e4e4" stroke="#777" stroke-width="1.5"/>
<polygon points="1312.1,449.7 1328.9,435.6 1337.9,446.3 1321.1,460.4" fill="#d6cec9" />
<polygon points="1339.2,431.2 1353.0,419.6 1360.8,428.8 1347.0,440.4" fill="#d6cec9" />
<polygon points="1350.5,473.0 1370.5,456.3 1379.5,467.0 1359.5,483.7" fill="#d6cec9" />
<polygon points="1379.4,494.1 1396.2,480.0 1404.6,489.9 1387.8,504.0" fill="#d6cec9" />
<polygon points="1399.2,471.2 1413.0,459.6 1420.8,468.8 1407.0,480.4" fill="#d6cec9" />
<polygon points="1321.4,409.8 1333.6,399.5 1342.6,410.2 1330.4,420.5" fill="#d6cec9" />
<polygon points="1420.5,513.8 1435.8,501.0 1443.5,510.2 1428.2,523.0" fill="#d6cec9" />
<polygon points="1445.3,498.9 1457.6,488.6 1464.7,497.1 1452.4,507.4" fill="#d6cec9" />
<polygon points="1424.7,502.5 1441.6,488.3 1449.3,497.5 1432.4,511.7" fill="#d6cec9" />
<polygon points="1455.9,523.4 1475.8,506.7 1484.1,516.6 1464.2,533.3" fill="#d6cec9" />
<polygon points="1427.7,537.5 1444.6,523.3 1452.3,532.5 1435.4,546.7" fill="#d6cec9" />
<polygon points="1456.5,565.3 1477.9,547.3 1487.5,558.7 1466.1,576.7" fill="#d6cec9" />
<polygon points="1493.4,581.5 1516.3,562.2 1526.6,574.5 1503.7,593.8" fill="#d6cec9" />
<polygon points="1522.8,603.6 1544.2,585.6 1553.2,596.4 1531.8,614.4" fill="#d6cec9" />
<polygon points="1542.5,565.6 1568.5,543.7 1577.5,554.4 1551.5,576.3" fill="#d6cec9" />
<polygon points="1574.0,589.3 1597.0,570.0 1606.0,580.7 1583.0,600.0" fill="#d6cec9" />
<polygon points="1588.5,549.8 1603.8,537.0 1611.5,546.2 1596.2,559.0" fill="#d6cec9" />
<polygon points="1567.9,634.2 1587.8,617.5 1598.1,629.8 1578.2,646.5" fill="#d6cec9" />
<polygon points="1599.1,611.7 1615.9,597.6 1624.9,608.3 1608.1,622.4" fill="#d6cec9" />
<polygon points="1613.9,646.0 1644.5,620.2 1656.1,634.0 1625.5,659.8" fill="#d6cec9" />
<polygon points="1647.4,620.1 1664.2,606.0 1672.6,615.9 1655.8,630.0" fill="#d6cec9" />
<polygon points="1671.2,664.0 1697.2,642.2 1708.8,656.0 1682.8,677.8" fill="#d6cec9" />
<polygon points="1646.0,680.3 1669.0,661.0 1678.0,671.7 1655.0,691.0" fill="#d6cec9" />
<polygon points="1589.4,675.2 1623.1,647.0 1634.6,660.8 1600.9,689.0" fill="#d6cec9" />
<polygon points="1621.1,705.4 1648.6,682.3 1658.9,694.6 1631.4,717.7" fill="#d6cec9" />
<polygon points="1710.4,671.5 1733.3,652.2 1743.6,664.5 1720.7,683.8" fill="#d6cec9" />
<polygon points="1258.9,678.0 1289.5,652.2 1301.1,666.0 1270.5,691.8" fill="#d6cec9" />
<polygon points="1324.4,760.9 1384.2,710.7 1399.6,729.1 1339.8,779.3" fill="#d6cec9" />
<polygon points="1353.6,783.8 1387.4,755.5 1396.4,766.2 1362.6,794.5" fill="#d6cec9" />
<polygon points="1379.7,735.0 1402.6,715.8 1410.3,725.0 1387.4,744.2" fill="#d6cec9" />
<polygon points="1415.7,661.6 1434.1,646.2 1444.3,658.4 1425.9,673.8" fill="#d6cec9" />
<polygon points="1403.1,600.0 1426.1,580.7 1438.9,596.0 1415.9,615.3" fill="#d6cec9" />
<polygon points="1295.9,838.5 1322.0,816.6 1336.1,833.5 1310.0,855.4" fill="#d6cec9" />
<polygon points="1324.1,883.1 1351.7,860.0 1365.9,876.9 1338.3,900.0" fill="#d6cec9" />
<polygon points="1359.8,794.2 1393.5,765.9 1410.2,785.8 1376.5,814.1" fill="#d6cec9" />
<polygon points="1354.7,844.7 1377.7,825.5 1389.3,839.3 1366.3,858.5" fill="#d6cec9" />
<polygon points="1412.5,768.1 1450.8,736.0 1467.5,755.9 1429.2,788.0" fill="#d6cec9" />
<polygon points="1447.6,794.4 1478.3,768.7 1492.4,785.6 1461.7,811.3" fill="#d6cec9" />
<polygon points="1482.7,780.7 1505.7,761.5 1517.3,775.3 1494.3,794.5" fill="#d6cec9" />
<polygon points="1401.8,826.8 1427.9,804.9 1438.2,817.2 1412.1,839.1" fill="#d6cec9" />
<polygon points="1386.3,880.4 1404.7,864.9 1413.7,875.6 1395.3,891.1" fill="#d6cec9" />
<polygon points="1596.9,734.0 1627.5,708.2 1639.1,722.0 1608.5,747.8" fill="#d6cec9" />
<polygon points="1777.8,677.0 1793.0,665.4 1849.0,696.0 1827.8,727.0 1814.0,725.0 1793.0,704.0" fill="#d6cec9" />
<polygon points="1860.5,715.5 1872.0,707.8 1918.0,740.5 1893.0,756.0 1885.5,750.0" fill="#d6cec9" />
<polygon points="1802.8,807.8 1833.6,790.5 1847.0,802.0 1824.0,829.0 1812.4,825.0" fill="#d6cec9" />
<polygon points="1897.0,806.0 1981.0,763.0 1905.0,824.0 1836.0,878.0 1812.0,868.0" fill="#d6cec9" />
<polygon points="1726.0,962.0 1745.0,900.0 1790.0,868.0 1800.0,878.0" fill="#d6cec9" />
<polygon points="1740.0,820.0 1784.0,800.0 1775.0,860.0 1752.0,850.0" fill="#d6cec9" />
<polygon points="1422.0,1257.0 1456.0,1248.0 1461.0,1255.0 1488.0,1250.0 1505.0,1277.0 1522.0,1277.0 1595.0,1350.0 1546.0,1382.0 1517.0,1353.0 1500.0,1362.0 1507.0,1343.0 1493.0,1331.0 1468.0,1331.0 1466.0,1353.0 1441.0,1358.0 1437.0,1343.0 1446.0,1321.0 1432.0,1287.0" fill="#d6cec9" />
<polygon points="1482.6,1441.2 1507.1,1424.0 1517.4,1438.8 1492.9,1456.0" fill="#d6cec9" />
<polygon points="1569.8,1224.4 1611.7,1197.1 1630.2,1225.6 1588.3,1252.9" fill="#d6cec9" />
<polygon points="1610.9,1256.0 1652.8,1228.8 1669.1,1254.0 1627.2,1281.2" fill="#d6cec9" />
<polygon points="1611.3,1315.3 1686.7,1266.3 1698.7,1284.7 1623.3,1333.7" fill="#d6cec9" />
<polygon points="1598.6,1340.2 1640.5,1313.0 1651.4,1329.8 1609.5,1357.0" fill="#d6cec9" />
<polygon points="1677.0,1302.7 1718.9,1275.5 1733.0,1297.3 1691.1,1324.5" fill="#d6cec9" />
<polygon points="1725.6,1271.8 1745.7,1258.8 1754.4,1272.2 1734.3,1285.2" fill="#d6cec9" />
<polygon points="1753.9,1200.2 1790.8,1176.3 1806.1,1199.8 1769.2,1223.7" fill="#d6cec9" />
<polygon points="1814.3,1180.6 1839.4,1164.3 1855.7,1189.4 1830.6,1205.7" fill="#d6cec9" />
<polygon points="1459.9,1203.8 1510.3,1171.1 1520.1,1186.2 1469.7,1218.9" fill="#d6cec9" />
<polygon points="1522.2,1201.7 1555.8,1179.9 1567.8,1198.3 1534.2,1220.1" fill="#d6cec9" />
<polygon points="1640.0,1465.0 1665.0,1465.0 1690.0,1478.0 1628.0,1478.0" fill="#d6cec9" />
<polygon points="1700.0,1470.0 1730.0,1478.0 1700.0,1478.0" fill="#d6cec9" />
<polygon points="2454.0,1446.0 2522.0,1446.0 2522.0,1478.0 2454.0,1478.0" fill="#cbc3be" />
<polygon points="2649.6,1169.0 2679.0,1169.0 2679.0,1164.7 2777.6,1184.4 2777.6,1190.0 2822.6,1198.5 2805.7,1274.4 2729.7,1263.0 2729.7,1271.6 2704.4,1266.0 2704.4,1257.5 2625.7,1237.8 2642.5,1198.5 2649.6,1198.5" fill="#d6cec9" />
<polygon points="2668.0,895.0 2688.0,892.0 2707.5,912.0 2713.0,906.0 2733.0,931.6 2721.6,951.0 2730.0,957.0 2707.5,971.0 2696.0,962.5 2668.0,982.0" fill="#d6cec9" />
<polygon points="2817.0,800.0 2860.0,778.0 2860.0,853.0 2835.0,850.0 2822.0,830.0" fill="#d6cec9" />
<polygon points="2848.0,915.0 2860.0,915.0 2860.0,985.0 2848.0,985.0" fill="#d6cec9" />
<polygon points="2761.0,1050.0 2784.0,1050.0 2784.0,1078.0 2761.0,1078.0" fill="#d6cec9" />
<polygon points="2733.0,1084.0 2747.0,1084.0 2747.0,1109.0 2733.0,1109.0" fill="#d6cec9" />
<polygon points="2380.0,224.0 2418.0,224.0 2418.0,245.0 2380.0,245.0" fill="#dcd6d2" />
<polygon points="1444.6,583.8 1470.0,599.7 1465.5,606.9 1440.1,591.0" fill="#a5d8b8" />
<polygon points="1434.1,592.1 1459.5,608.0 1455.0,615.3 1429.5,599.4" fill="#a5d8b8" />
<polygon points="1423.5,600.5 1449.0,616.4 1444.5,623.6 1419.0,607.7" fill="#a5d8b8" />
<polygon points="1413.0,608.9 1438.4,624.8 1433.9,632.0 1408.5,616.1" fill="#a5d8b8" />
<polygon points="1402.5,617.3 1427.9,633.2 1423.4,640.4 1398.0,624.5" fill="#a5d8b8" />
<polygon points="1391.9,625.6 1417.4,641.5 1412.9,648.7 1387.4,632.8" fill="#a5d8b8" />
<polygon points="1381.4,634.0 1406.8,649.9 1402.3,657.1 1376.9,641.2" fill="#a5d8b8" />
<polygon points="1476.9,603.9 1502.3,619.8 1497.8,627.0 1472.4,611.1" fill="#a5d8b8" />
<polygon points="1466.4,612.3 1491.8,628.2 1487.3,635.4 1461.8,619.5" fill="#a5d8b8" />
<polygon points="1455.8,620.7 1481.3,636.6 1476.8,643.8 1451.3,627.9" fill="#a5d8b8" />
<polygon points="1445.3,629.0 1470.7,644.9 1466.2,652.1 1440.8,636.2" fill="#a5d8b8" />
<polygon points="1434.8,637.4 1460.2,653.3 1455.7,660.5 1430.3,644.6" fill="#a5d8b8" />
<polygon points="1424.2,645.8 1449.7,661.7 1445.2,668.9 1419.7,653.0" fill="#a5d8b8" />
<polygon points="1413.7,654.1 1439.1,670.0 1434.6,677.2 1409.2,661.3" fill="#a5d8b8" />
<polygon points="1509.2,624.1 1534.6,640.0 1530.1,647.2 1504.7,631.3" fill="#a5d8b8" />
<polygon points="1498.7,632.4 1524.1,648.3 1519.6,655.5 1494.1,639.6" fill="#a5d8b8" />
<polygon points="1488.1,640.8 1513.6,656.7 1509.1,663.9 1483.6,648.0" fill="#a5d8b8" />
<polygon points="1477.6,649.2 1503.0,665.1 1498.5,672.3 1473.1,656.4" fill="#a5d8b8" />
<polygon points="1467.1,657.5 1492.5,673.4 1488.0,680.6 1462.6,664.7" fill="#a5d8b8" />
<polygon points="1456.5,665.9 1482.0,681.8 1477.5,689.0 1452.0,673.1" fill="#a5d8b8" />
<polygon points="1446.0,674.3 1471.4,690.2 1466.9,697.4 1441.5,681.5" fill="#a5d8b8" />
<text x="1056.0" y="303.2" text-anchor="middle" fill="#fff" style="font-family:DejaVu Sans, Liberation Sans, sans-serif;font-size:14.5px;" stroke="#fff" stroke-width="3.05" stroke-linejoin="round">West 8th Street</text>
<text x="1056.0" y="303.2" text-anchor="middle" fill="#2b2b2b" style="font-family:DejaVu Sans, Liberation Sans, sans-serif;font-size:14.5px;" stroke="#2b2b2b" stroke-width="0.55">West 8th Street</text>
<text x="1338.8" y="298.2" text-anchor="middle" fill="#fff" style="font-family:DejaVu Sans, Liberation Sans, sans-serif;font-size:14.5px;" transform="rotate(2 1338.8 298.2)" stroke="#fff" stroke-width="3.05" stroke-linejoin="round">West 8th Street</text>
<text x="1338.8" y="298.2" text-anchor="middle" fill="#2b2b2b" style="font-family:DejaVu Sans, Liberation Sans, sans-serif;font-size:14.5px;" transform="rotate(2 1338.8 298.2)" stroke="#2b2b2b" stroke-width="0.55">West 8th Street</text>
<text x="1138.2" y="298.0" text-anchor="middle" fill="#fff" style="font-family:DejaVu Sans, Liberation Sans, sans-serif;font-size:14.5px;" transform="rotate(-90 1138.2 298.0)" stroke="#fff" stroke-width="3.05" stroke-linejoin="round">Gateway Drive</text>
<text x="1138.2" y="298.0" text-anchor="middle" fill="#2b2b2b" style="font-family:DejaVu Sans, Liberation Sans, sans-serif;font-size:14.5px;" transform="rotate(-90 1138.2 298.0)" stroke="#2b2b2b" stroke-width="0.55">Gateway Drive</text>
<text x="1093.0" y="387.5" text-anchor="start" fill="#3a2a22" style="font-family:DejaVu Sans, Liberation Sans, sans-serif;font-size:16.5px;" stroke="#3a2a22" stroke-width="0.55">Turner McCall Boulevard</text>
<rect x="1329" y="342.5" width="78" height="31" rx="2" fill="#fcdad5" stroke="#f7a99c" stroke-width="2"/>
<text x="1368.0" y="366.0" text-anchor="middle" fill="#8c5a3c" style="font-family:DejaVu Sans, Liberation Sans, sans-serif;font-size:19.5px;" stroke="#8c5a3c" stroke-width="0.55">US 27</text>
<text x="1086.0" y="346.0" text-anchor="middle" fill="#2b95f5" style="font-family:DejaVu Sans, Liberation Sans, sans-serif;font-size:30px;font-weight:bold;" stroke="#2b95f5" stroke-width="0.55">P</text>
<text x="1294.0" y="534.0" text-anchor="middle" fill="#2b95f5" style="font-family:DejaVu Sans, Liberation Sans, sans-serif;font-size:28px;font-weight:bold;" stroke="#2b95f5" stroke-width="0.55">P</text>
<text x="1071.0" y="459.6" text-anchor="middle" fill="#e9e4e0" style="font-family:DejaVu Sans, Liberation Sans, sans-serif;font-size:20px;" stroke="#e9e4e0" stroke-width="2.05" stroke-linejoin="round">Floyd</text>
<text x="1071.0" y="459.6" text-anchor="middle" fill="#6b6b6b" style="font-family:DejaVu Sans, Liberation Sans, sans-serif;font-size:20px;" stroke="#6b6b6b" stroke-width="0.55">Floyd</text>
<text x="1071.0" y="482.1" text-anchor="middle" fill="#e9e4e0" style="font-family:DejaVu Sans, Liberation Sans, sans-serif;font-size:20px;" stroke="#e9e4e0" stroke-width="2.05" stroke-linejoin="round">Medical</text>
<text x="1071.0" y="482.1" text-anchor="middle" fill="#6b6b6b" style="font-family:DejaVu Sans, Liberation Sans, sans-serif;font-size:20px;" stroke="#6b6b6b" stroke-width="0.55">Medical</text>
<text x="1071.0" y="504.6" text-anchor="middle" fill="#e9e4e0" style="font-family:DejaVu Sans, Liberation Sans, sans-serif;font-size:20px;" stroke="#e9e4e0" stroke-width="2.05" stroke-linejoin="round">Center</text>
<text x="1071.0" y="504.6" text-anchor="middle" fill="#6b6b6b" style="font-family:DejaVu Sans, Liberation Sans, sans-serif;font-size:20px;" stroke="#6b6b6b" stroke-width="0.55">Center</text>
<ellipse cx="1179" cy="504" rx="15" ry="12" fill="#f8323c"/><path d="M1172 504h14M1179 497v14" stroke="#fff" stroke-width="2.6"/>
<text x="1181.0" y="532.5" text-anchor="middle" fill="#f6efe6" style="font-family:DejaVu Sans, Liberation Sans, sans-serif;font-size:16px;" stroke="#f6efe6" stroke-width="2.55" stroke-linejoin="round">Floyd Medical</text>
<text x="1181.0" y="532.5" text-anchor="middle" fill="#e8303a" style="font-family:DejaVu Sans, Liberation Sans, sans-serif;font-size:16px;" stroke="#e8303a" stroke-width="0.55">Floyd Medical</text>
<text x="1179.0" y="552.0" text-anchor="middle" fill="#f6efe6" style="font-family:DejaVu Sans, Liberation Sans, sans-serif;font-size:16px;" stroke="#f6efe6" stroke-width="2.55" stroke-linejoin="round">Center</text>
<text x="1179.0" y="552.0" text-anchor="middle" fill="#e8303a" style="font-family:DejaVu Sans, Liberation Sans, sans-serif;font-size:16px;" stroke="#e8303a" stroke-width="0.55">Center</text>
<text x="1333.1" y="593.1" text-anchor="middle" fill="#fff" style="font-family:DejaVu Sans, Liberation Sans, sans-serif;font-size:14.5px;" transform="rotate(-43 1333.1 593.1)" stroke="#fff" stroke-width="3.05" stroke-linejoin="round">West 5th Street</text>
<text x="1333.1" y="593.1" text-anchor="middle" fill="#2b2b2b" style="font-family:DejaVu Sans, Liberation Sans, sans-serif;font-size:14.5px;" transform="rotate(-43 1333.1 593.1)" stroke="#2b2b2b" stroke-width="0.55">West 5th Street</text>
<text x="1477.5" y="592.6" text-anchor="middle" fill="#fff" style="font-family:DejaVu Sans, Liberation Sans, sans-serif;font-size:14.5px;" transform="rotate(37 1477.5 592.6)" stroke="#fff" stroke-width="3.05" stroke-linejoin="round">North 4th Avenue</text>
<text x="1477.5" y="592.6" text-anchor="middle" fill="#2b2b2b" style="font-family:DejaVu Sans, Liberation Sans, sans-serif;font-size:14.5px;" transform="rotate(37 1477.5 592.6)" stroke="#2b2b2b" stroke-width="0.55">North 4th Avenue</text>
<text x="1467.6" y="716.7" text-anchor="middle" fill="#fff" style="font-family:DejaVu Sans, Liberation Sans, sans-serif;font-size:14.5px;" transform="rotate(-36 1467.6 716.7)" stroke="#fff" stroke-width="3.05" stroke-linejoin="round">West 3rd Street</text>
<text x="1467.6" y="716.7" text-anchor="middle" fill="#2b2b2b" style="font-family:DejaVu Sans, Liberation Sans, sans-serif;font-size:14.5px;" transform="rotate(-36 1467.6 716.7)" stroke="#2b2b2b" stroke-width="0.55">West 3rd Street</text>
<text x="1469.2" y="842.8" text-anchor="middle" fill="#fff" style="font-family:DejaVu Sans, Liberation Sans, sans-serif;font-size:14px;" transform="rotate(-31 1469.2 842.8)" stroke="#fff" stroke-width="3.05" stroke-linejoin="round">Heritage Trail</text>
<text x="1469.2" y="842.8" text-anchor="middle" fill="#555" style="font-family:DejaVu Sans, Liberation Sans, sans-serif;font-size:14px;" transform="rotate(-31 1469.2 842.8)" stroke="#555" stroke-width="0.55">Heritage Trail</text>
<text x="1665.4" y="717.4" text-anchor="middle" fill="#fff" style="font-family:DejaVu Sans, Liberation Sans, sans-serif;font-size:14px;" transform="rotate(-28.5 1665.4 717.4)" stroke="#fff" stroke-width="3.05" stroke-linejoin="round">Heritage Trail</text>
<text x="1665.4" y="717.4" text-anchor="middle" fill="#555" style="font-family:DejaVu Sans, Liberation Sans, sans-serif;font-size:14px;" transform="rotate(-28.5 1665.4 717.4)" stroke="#555" stroke-width="0.55">Heritage Trail</text>
<text x="1413.6" y="993.8" text-anchor="middle" fill="#fff" style="font-family:DejaVu Sans, Liberation Sans, sans-serif;font-size:14px;" transform="rotate(-18 1413.6 993.8)" stroke="#fff" stroke-width="3.05" stroke-linejoin="round">Heritage Trail</text>
<text x="1413.6" y="993.8" text-anchor="middle" fill="#555" style="font-family:DejaVu Sans, Liberation Sans, sans-serif;font-size:14px;" transform="rotate(-18 1413.6 993.8)" stroke="#555" stroke-width="0.55">Heritage Trail</text>
<text x="1754.4" y="743.1" text-anchor="middle" fill="#e0e4ea" style="font-family:DejaVu Sans, Liberation Sans, sans-serif;font-size:19.5px;font-style:italic;" transform="rotate(-39 1754.4 743.1)" stroke="#e0e4ea" stroke-width="2.05" stroke-linejoin="round">Oostanaula River</text>
<text x="1754.4" y="743.1" text-anchor="middle" fill="#5d9bd3" style="font-family:DejaVu Sans, Liberation Sans, sans-serif;font-size:19.5px;font-style:italic;" transform="rotate(-39 1754.4 743.1)" stroke="#5d9bd3" stroke-width="0.55">Oostanaula River</text>
<text x="1265.7" y="801.6" text-anchor="middle" fill="#2a2418" style="font-family:DejaVu Sans, Liberation Sans, sans-serif;font-size:15.5px;font-style:italic;" transform="rotate(50.3 1265.7 801.6)" stroke="#2a2418" stroke-width="0.55">North 2nd Avenue</text>
<text x="1816.0" y="319.0" text-anchor="middle" fill="#cfeed4" style="font-family:DejaVu Sans, Liberation Sans, sans-serif;font-size:24px;font-style:italic;" stroke="#cfeed4" stroke-width="1.55" stroke-linejoin="round">Rome City</text>
<text x="1816.0" y="319.0" text-anchor="middle" fill="#1f9a33" style="font-family:DejaVu Sans, Liberation Sans, sans-serif;font-size:24px;font-style:italic;" stroke="#1f9a33" stroke-width="0.55">Rome City</text>
<text x="1816.0" y="347.0" text-anchor="middle" fill="#cfeed4" style="font-family:DejaVu Sans, Liberation Sans, sans-serif;font-size:24px;font-style:italic;" stroke="#cfeed4" stroke-width="1.55" stroke-linejoin="round">Park</text>
<text x="1816.0" y="347.0" text-anchor="middle" fill="#1f9a33" style="font-family:DejaVu Sans, Liberation Sans, sans-serif;font-size:24px;font-style:italic;" stroke="#1f9a33" stroke-width="0.55">Park</text>
<text x="2041.0" y="338.0" text-anchor="end" fill="#2a2418" style="font-family:DejaVu Sans, Liberation Sans, sans-serif;font-size:15.5px;" transform="rotate(76 2041.0 338.0)" stroke="#2a2418" stroke-width="0.55">Riverside Parkway Northeast</text>
<text x="2288.0" y="302.0" text-anchor="end" fill="#fff" style="font-family:DejaVu Sans, Liberation Sans, sans-serif;font-size:14.5px;" transform="rotate(78 2288.0 302.0)" stroke="#fff" stroke-width="3.05" stroke-linejoin="round">Civic Center Drive</text>
<text x="2288.0" y="302.0" text-anchor="end" fill="#2b2b2b" style="font-family:DejaVu Sans, Liberation Sans, sans-serif;font-size:14.5px;" transform="rotate(78 2288.0 302.0)" stroke="#2b2b2b" stroke-width="0.55">Civic Center Drive</text>
<text x="2488.3" y="285.1" text-anchor="middle" fill="#fff" style="font-family:DejaVu Sans, Liberation Sans, sans-serif;font-size:14.5px;" transform="rotate(-39 2488.3 285.1)" stroke="#fff" stroke-width="3.05" stroke-linejoin="round">Reservoir Street</text>
<text x="2488.3" y="285.1" text-anchor="middle" fill="#2b2b2b" style="font-family:DejaVu Sans, Liberation Sans, sans-serif;font-size:14.5px;" transform="rotate(-39 2488.3 285.1)" stroke="#2b2b2b" stroke-width="0.55">Reservoir Street</text>
<text x="2691.8" y="488.8" text-anchor="middle" fill="#fff" style="font-family:DejaVu Sans, Liberation Sans, sans-serif;font-size:13.5px;" transform="rotate(-80 2691.8 488.8)" stroke="#fff" stroke-width="3.05" stroke-linejoin="round">West Ross Street</text>
<text x="2691.8" y="488.8" text-anchor="middle" fill="#2b2b2b" style="font-family:DejaVu Sans, Liberation Sans, sans-serif;font-size:13.5px;" transform="rotate(-80 2691.8 488.8)" stroke="#2b2b2b" stroke-width="0.55">West Ross Street</text>
<text x="2731.0" y="262.0" text-anchor="start" fill="#fff" style="font-family:DejaVu Sans, Liberation Sans, sans-serif;font-size:13.5px;" transform="rotate(-80 2731.0 262.0)" stroke="#fff" stroke-width="3.05" stroke-linejoin="round">West Ross Street</text>
<text x="2731.0" y="262.0" text-anchor="start" fill="#2b2b2b" style="font-family:DejaVu Sans, Liberation Sans, sans-serif;font-size:13.5px;" transform="rotate(-80 2731.0 262.0)" stroke="#2b2b2b" stroke-width="0.55">West Ross Street</text>
<text x="2803.0" y="485.0" text-anchor="start" fill="#3a2a22" style="font-family:DejaVu Sans, Liberation Sans, sans-serif;font-size:15.5px;" transform="rotate(-56.5 2803.0 485.0)" stroke="#3a2a22" stroke-width="0.55">North Broad Street</text>
<text x="2806.0" y="296.0" text-anchor="start" fill="#fff" style="font-family:DejaVu Sans, Liberation Sans, sans-serif;font-size:14.5px;" transform="rotate(28 2806.0 296.0)" stroke="#fff" stroke-width="3.05" stroke-linejoin="round">Duke Street</text>
<text x="2806.0" y="296.0" text-anchor="start" fill="#2b2b2b" style="font-family:DejaVu Sans, Liberation Sans, sans-serif;font-size:14.5px;" transform="rotate(28 2806.0 296.0)" stroke="#2b2b2b" stroke-width="0.55">Duke Street</text>
<text x="2807.0" y="262.0" text-anchor="start" fill="#fff" style="font-family:DejaVu Sans, Liberation Sans, sans-serif;font-size:14px;" transform="rotate(-56 2807.0 262.0)" stroke="#fff" stroke-width="3.05" stroke-linejoin="round">Heard Street</text>
<text x="2807.0" y="262.0" text-anchor="start" fill="#2b2b2b" style="font-family:DejaVu Sans, Liberation Sans, sans-serif;font-size:14px;" transform="rotate(-56 2807.0 262.0)" stroke="#2b2b2b" stroke-width="0.55">Heard Street</text>
<text x="1035.0" y="989.0" text-anchor="start" fill="#fff" style="font-family:DejaVu Sans, Liberation Sans, sans-serif;font-size:15.5px;" stroke="#fff" stroke-width="3.05" stroke-linejoin="round">Branham</text>
<text x="1035.0" y="989.0" text-anchor="start" fill="#2b2b2b" style="font-family:DejaVu Sans, Liberation Sans, sans-serif;font-size:15.5px;" stroke="#2b2b2b" stroke-width="0.55">Branham</text>
<text x="1119.0" y="985.0" text-anchor="start" fill="#fff" style="font-family:DejaVu Sans, Liberation Sans, sans-serif;font-size:15.5px;" transform="rotate(17 1119.0 985.0)" stroke="#fff" stroke-width="3.05" stroke-linejoin="round">Avenue</text>
<text x="1119.0" y="985.0" text-anchor="start" fill="#2b2b2b" style="font-family:DejaVu Sans, Liberation Sans, sans-serif;font-size:15.5px;" transform="rotate(17 1119.0 985.0)" stroke="#2b2b2b" stroke-width="0.55">Avenue</text>
<text x="1076.0" y="1170.0" text-anchor="middle" fill="#d8e8dc" style="font-family:DejaVu Sans, Liberation Sans, sans-serif;font-size:20px;font-style:italic;" stroke="#d8e8dc" stroke-width="2.55" stroke-linejoin="round">Myrtle</text>
<text x="1076.0" y="1170.0" text-anchor="middle" fill="#5a5a5a" style="font-family:DejaVu Sans, Liberation Sans, sans-serif;font-size:20px;font-style:italic;" stroke="#5a5a5a" stroke-width="0.55">Myrtle</text>
<text x="1076.0" y="1194.0" text-anchor="middle" fill="#d8e8dc" style="font-family:DejaVu Sans, Liberation Sans, sans-serif;font-size:20px;font-style:italic;" stroke="#d8e8dc" stroke-width="2.55" stroke-linejoin="round">Hill Cemetery</text>
<text x="1076.0" y="1194.0" text-anchor="middle" fill="#5a5a5a" style="font-family:DejaVu Sans, Liberation Sans, sans-serif;font-size:20px;font-style:italic;" stroke="#5a5a5a" stroke-width="0.55">Hill Cemetery</text>
<text x="1176.0" y="1358.0" text-anchor="middle" fill="#eee" style="font-family:DejaVu Sans, Liberation Sans, sans-serif;font-size:15px;" stroke="#eee" stroke-width="2.05" stroke-linejoin="round">Forrest</text>
<text x="1176.0" y="1358.0" text-anchor="middle" fill="#9a7b4a" style="font-family:DejaVu Sans, Liberation Sans, sans-serif;font-size:15px;" stroke="#9a7b4a" stroke-width="0.55">Forrest</text>
<text x="1176.0" y="1381.0" text-anchor="middle" fill="#eee" style="font-family:DejaVu Sans, Liberation Sans, sans-serif;font-size:19.5px;" stroke="#eee" stroke-width="2.05" stroke-linejoin="round">Monument</text>
<text x="1176.0" y="1381.0" text-anchor="middle" fill="#9a7b4a" style="font-family:DejaVu Sans, Liberation Sans, sans-serif;font-size:19.5px;" stroke="#9a7b4a" stroke-width="0.55">Monument</text>
<text x="1077.2" y="1370.0" text-anchor="middle" fill="#fff" style="font-family:DejaVu Sans, Liberation Sans, sans-serif;font-size:14.5px;" transform="rotate(-90 1077.2 1370.0)" stroke="#fff" stroke-width="3.05" stroke-linejoin="round">Klassing Street</text>
<text x="1077.2" y="1370.0" text-anchor="middle" fill="#2b2b2b" style="font-family:DejaVu Sans, Liberation Sans, sans-serif;font-size:14.5px;" transform="rotate(-90 1077.2 1370.0)" stroke="#2b2b2b" stroke-width="0.55">Klassing Street</text>
<text x="962.0" y="1452.0" text-anchor="start" fill="#fff" style="font-family:DejaVu Sans, Liberation Sans, sans-serif;font-size:14.5px;" stroke="#fff" stroke-width="3.05" stroke-linejoin="round">eet</text>
<text x="962.0" y="1452.0" text-anchor="start" fill="#2b2b2b" style="font-family:DejaVu Sans, Liberation Sans, sans-serif;font-size:14.5px;" stroke="#2b2b2b" stroke-width="0.55">eet</text>
<text x="1290.0" y="1410.0" text-anchor="start" fill="#fff" style="font-family:DejaVu Sans, Liberation Sans, sans-serif;font-size:14.5px;" transform="rotate(78 1290.0 1410.0)" stroke="#fff" stroke-width="3.05" stroke-linejoin="round">Etowah Terrace</text>
<text x="1290.0" y="1410.0" text-anchor="start" fill="#2b2b2b" style="font-family:DejaVu Sans, Liberation Sans, sans-serif;font-size:14.5px;" transform="rotate(78 1290.0 1410.0)" stroke="#2b2b2b" stroke-width="0.55">Etowah Terrace</text>
<text x="1369.2" y="1354.7" text-anchor="middle" fill="#5d9bd3" style="font-family:DejaVu Sans, Liberation Sans, sans-serif;font-size:19px;font-style:italic;" transform="rotate(84 1369.2 1354.7)" stroke="#5d9bd3" stroke-width="0.55">Etowah River</text>
<text x="1699.5" y="1230.1" text-anchor="middle" fill="#fff" style="font-family:DejaVu Sans, Liberation Sans, sans-serif;font-size:14.5px;" transform="rotate(-32.3 1699.5 1230.1)" stroke="#fff" stroke-width="3.05" stroke-linejoin="round">East 2nd Street</text>
<text x="1699.5" y="1230.1" text-anchor="middle" fill="#2b2b2b" style="font-family:DejaVu Sans, Liberation Sans, sans-serif;font-size:14.5px;" transform="rotate(-32.3 1699.5 1230.1)" stroke="#2b2b2b" stroke-width="0.55">East 2nd Street</text>
<text x="1861.8" y="1231.4" text-anchor="middle" fill="#fff" style="font-family:DejaVu Sans, Liberation Sans, sans-serif;font-size:14.5px;" transform="rotate(-32 1861.8 1231.4)" stroke="#fff" stroke-width="3.05" stroke-linejoin="round">East 3rd Street</text>
<text x="1861.8" y="1231.4" text-anchor="middle" fill="#2b2b2b" style="font-family:DejaVu Sans, Liberation Sans, sans-serif;font-size:14.5px;" transform="rotate(-32 1861.8 1231.4)" stroke="#2b2b2b" stroke-width="0.55">East 3rd Street</text>
<text x="1764.8" y="1339.6" text-anchor="middle" fill="#2a2418" style="font-family:DejaVu Sans, Liberation Sans, sans-serif;font-size:15.5px;font-style:italic;" transform="rotate(44.5 1764.8 1339.6)" stroke="#2a2418" stroke-width="0.55">East 2nd Avenue</text>
<text x="1672.4" y="1414.8" text-anchor="middle" fill="#fff" style="font-family:DejaVu Sans, Liberation Sans, sans-serif;font-size:14.5px;" transform="rotate(43.3 1672.4 1414.8)" stroke="#fff" stroke-width="3.05" stroke-linejoin="round">East 1st Avenue</text>
<text x="1672.4" y="1414.8" text-anchor="middle" fill="#2b2b2b" style="font-family:DejaVu Sans, Liberation Sans, sans-serif;font-size:14.5px;" transform="rotate(43.3 1672.4 1414.8)" stroke="#2b2b2b" stroke-width="0.55">East 1st Avenue</text>
<text x="1935.9" y="1407.4" text-anchor="middle" fill="#fff" style="font-family:DejaVu Sans, Liberation Sans, sans-serif;font-size:14.5px;" transform="rotate(-33.4 1935.9 1407.4)" stroke="#fff" stroke-width="3.05" stroke-linejoin="round">East 4th Street</text>
<text x="1935.9" y="1407.4" text-anchor="middle" fill="#2b2b2b" style="font-family:DejaVu Sans, Liberation Sans, sans-serif;font-size:14.5px;" transform="rotate(-33.4 1935.9 1407.4)" stroke="#2b2b2b" stroke-width="0.55">East 4th Street</text>
<text x="1998.9" y="1328.8" text-anchor="middle" fill="#fff" style="font-family:DejaVu Sans, Liberation Sans, sans-serif;font-size:14.5px;" transform="rotate(44 1998.9 1328.8)" stroke="#fff" stroke-width="3.05" stroke-linejoin="round">East 3rd Avenue</text>
<text x="1998.9" y="1328.8" text-anchor="middle" fill="#2b2b2b" style="font-family:DejaVu Sans, Liberation Sans, sans-serif;font-size:14.5px;" transform="rotate(44 1998.9 1328.8)" stroke="#2b2b2b" stroke-width="0.55">East 3rd Avenue</text>
<text x="2080.0" y="1247.1" text-anchor="middle" fill="#fff" style="font-family:DejaVu Sans, Liberation Sans, sans-serif;font-size:14.5px;" transform="rotate(28.2 2080.0 1247.1)" stroke="#fff" stroke-width="3.05" stroke-linejoin="round">College Avenue</text>
<text x="2080.0" y="1247.1" text-anchor="middle" fill="#2b2b2b" style="font-family:DejaVu Sans, Liberation Sans, sans-serif;font-size:14.5px;" transform="rotate(28.2 2080.0 1247.1)" stroke="#2b2b2b" stroke-width="0.55">College Avenue</text>
<text x="2158.2" y="1204.4" text-anchor="middle" fill="#fff" style="font-family:DejaVu Sans, Liberation Sans, sans-serif;font-size:14.5px;" transform="rotate(33 2158.2 1204.4)" stroke="#fff" stroke-width="3.05" stroke-linejoin="round">East 4th Avenue</text>
<text x="2158.2" y="1204.4" text-anchor="middle" fill="#2b2b2b" style="font-family:DejaVu Sans, Liberation Sans, sans-serif;font-size:14.5px;" transform="rotate(33 2158.2 1204.4)" stroke="#2b2b2b" stroke-width="0.55">East 4th Avenue</text>
<text x="2258.7" y="1371.2" text-anchor="middle" fill="#fff" style="font-family:DejaVu Sans, Liberation Sans, sans-serif;font-size:14.5px;" transform="rotate(-65.5 2258.7 1371.2)" stroke="#fff" stroke-width="3.05" stroke-linejoin="round">Glenn Milner Boulevard</text>
<text x="2258.7" y="1371.2" text-anchor="middle" fill="#2b2b2b" style="font-family:DejaVu Sans, Liberation Sans, sans-serif;font-size:14.5px;" transform="rotate(-65.5 2258.7 1371.2)" stroke="#2b2b2b" stroke-width="0.55">Glenn Milner Boulevard</text>
<text x="2374.0" y="1200.0" text-anchor="start" fill="#5d9bd3" style="font-family:DejaVu Sans, Liberation Sans, sans-serif;font-size:17px;font-style:italic;" transform="rotate(-78 2374.0 1200.0)" stroke="#5d9bd3" stroke-width="0.55">Etowah River</text>
<text x="2597.7" y="1253.8" text-anchor="middle" fill="#3a2a22" style="font-family:DejaVu Sans, Liberation Sans, sans-serif;font-size:15.5px;" transform="rotate(71 2597.7 1253.8)" stroke="#3a2a22" stroke-width="0.55">Turner McCall Boulevard</text>
<text x="2524.5" y="1391.0" text-anchor="middle" fill="#fbe9e7" style="font-family:DejaVu Sans, Liberation Sans, sans-serif;font-size:18px;font-style:italic;" stroke="#fbe9e7" stroke-width="2.05" stroke-linejoin="round">Riverside</text>
<text x="2524.5" y="1391.0" text-anchor="middle" fill="#7a7070" style="font-family:DejaVu Sans, Liberation Sans, sans-serif;font-size:18px;font-style:italic;" stroke="#7a7070" stroke-width="0.55">Riverside</text>
<text x="2730.7" y="1044.1" text-anchor="middle" fill="#fff" style="font-family:DejaVu Sans, Liberation Sans, sans-serif;font-size:13.5px;" transform="rotate(-50 2730.7 1044.1)" stroke="#fff" stroke-width="3.05" stroke-linejoin="round">Hicks Road</text>
<text x="2730.7" y="1044.1" text-anchor="middle" fill="#2b2b2b" style="font-family:DejaVu Sans, Liberation Sans, sans-serif;font-size:13.5px;" transform="rotate(-50 2730.7 1044.1)" stroke="#2b2b2b" stroke-width="0.55">Hicks Road</text>
<text x="2850.8" y="1107.8" text-anchor="middle" fill="#fff" style="font-family:DejaVu Sans, Liberation Sans, sans-serif;font-size:13.5px;" transform="rotate(-80 2850.8 1107.8)" stroke="#fff" stroke-width="3.05" stroke-linejoin="round">Atlanta North</text>
<text x="2850.8" y="1107.8" text-anchor="middle" fill="#666" style="font-family:DejaVu Sans, Liberation Sans, sans-serif;font-size:13.5px;" transform="rotate(-80 2850.8 1107.8)" stroke="#666" stroke-width="0.55">Atlanta North</text>
<text x="1618.0" y="322.0" text-anchor="end" fill="#fff" style="font-family:DejaVu Sans, Liberation Sans, sans-serif;font-size:14.5px;" transform="rotate(-90 1618.0 322.0)" stroke="#fff" stroke-width="3.05" stroke-linejoin="round">Avenue A</text>
<text x="1618.0" y="322.0" text-anchor="end" fill="#2b2b2b" style="font-family:DejaVu Sans, Liberation Sans, sans-serif;font-size:14.5px;" transform="rotate(-90 1618.0 322.0)" stroke="#2b2b2b" stroke-width="0.55">Avenue A</text>
<text x="2856.0" y="1300.0" text-anchor="start" fill="#fff" style="font-family:DejaVu Sans, Liberation Sans, sans-serif;font-size:13px;" transform="rotate(-85 2856.0 1300.0)" stroke="#fff" stroke-width="3.05" stroke-linejoin="round">James</text>
<text x="2856.0" y="1300.0" text-anchor="start" fill="#2b2b2b" style="font-family:DejaVu Sans, Liberation Sans, sans-serif;font-size:13px;" transform="rotate(-85 2856.0 1300.0)" stroke="#2b2b2b" stroke-width="0.55">James</text>
<text x="2392.0" y="1478.0" text-anchor="end" fill="#fff" style="font-family:DejaVu Sans, Liberation Sans, sans-serif;font-size:13px;" transform="rotate(-88 2392.0 1478.0)" stroke="#fff" stroke-width="3.05" stroke-linejoin="round">Rive</text>
<text x="2392.0" y="1478.0" text-anchor="end" fill="#2b2b2b" style="font-family:DejaVu Sans, Liberation Sans, sans-serif;font-size:13px;" transform="rotate(-88 2392.0 1478.0)" stroke="#2b2b2b" stroke-width="0.55">Rive</text>
<path d="M1717.0 1267.0h20.0M1727.0 1255.0v26.0" stroke="#111" stroke-width="3.2" fill="none"/>
<path d="M2698.5 618.6h20.0M2708.5 606.6v26.0" stroke="#111" stroke-width="3.2" fill="none"/>
<path d="M2828.0 618.6h20.0M2838.0 606.6v26.0" stroke="#111" stroke-width="3.2" fill="none"/>
<path d="M1797.0 1169.0h16.0M1805.0 1159.0v22.0" stroke="#111" stroke-width="3.2" fill="none"/>
<path d="M1527.0 1444.6l14 14M1541.0 1444.6l-14 14" stroke="#444" stroke-width="2" fill="none"/>
<path d="M2306.0 1222.0l14 14M2320.0 1222.0l-14 14" stroke="#444" stroke-width="2" fill="none"/>
<path d="M2287.0 1271.5l14 14M2301.0 1271.5l-14 14" stroke="#444" stroke-width="2" fill="none"/>
<g stroke="#f0404a" stroke-width="2" fill="none"><path d="M1222 248h22l-3 10h-16zM1244 248l3-5M1226 262h18"/></g>
<path d="M2005 1223l7-11 7 11z" fill="#e08a2a"/>
<g><path d="M1780 764v22M1770 787h20M1769 768h22" stroke="#7a5a3a" stroke-width="2.2" fill="none"/><path d="M1780 766v18" stroke="#e03030" stroke-width="2"/><path d="M1765 778h9M1786 778h9" stroke="#7a5a3a" stroke-width="3"/></g>
<g><rect x="1170" y="1316" width="7" height="14" fill="#f0323c"/><path d="M1164 1334h19l-3-5h-13z" fill="#f0323c"/><path d="M1163 1336h21" stroke="#9a7b4a" stroke-width="1.5"/></g>
<rect x="2845" y="797" width="12" height="10" fill="#f4b0a8" stroke="#e05050" stroke-width="1"/>
<path d="M997 1055h8v11h4v3h-16v-3h4z" fill="#8f9590"/>
<path d="M1062 1055h8v11h4v3h-16v-3h4z" fill="#8f9590"/>
<path d="M1126 1055h8v11h4v3h-16v-3h4z" fill="#8f9590"/>
<path d="M1189 1055h8v11h4v3h-16v-3h4z" fill="#8f9590"/>
<path d="M997 1109h8v11h4v3h-16v-3h4z" fill="#8f9590"/>
<path d="M1062 1109h8v11h4v3h-16v-3h4z" fill="#8f9590"/>
<path d="M1126 1109h8v11h4v3h-16v-3h4z" fill="#8f9590"/>
<path d="M1189 1109h8v11h4v3h-16v-3h4z" fill="#8f9590"/>
<path d="M1253 1109h8v11h4v3h-16v-3h4z" fill="#8f9590"/>
<path d="M997 1163h8v11h4v3h-16v-3h4z" fill="#8f9590"/>
<path d="M1126 1163h8v11h4v3h-16v-3h4z" fill="#8f9590"/>
<path d="M1189 1163h8v11h4v3h-16v-3h4z" fill="#8f9590"/>
<path d="M997 1215h8v11h4v3h-16v-3h4z" fill="#8f9590"/>
<path d="M1062 1215h8v11h4v3h-16v-3h4z" fill="#8f9590"/>
<path d="M1126 1215h8v11h4v3h-16v-3h4z" fill="#8f9590"/>
<path d="M1189 1215h8v11h4v3h-16v-3h4z" fill="#8f9590"/>
<path d="M1253 1215h8v11h4v3h-16v-3h4z" fill="#8f9590"/>
<path d="M1062 1006h8v11h4v3h-16v-3h4z" fill="#8f9590"/>
<path d="M1126 1006h8v11h4v3h-16v-3h4z" fill="#8f9590"/>
<path d="M1126 1269h8v11h4v3h-16v-3h4z" fill="#8f9590"/>
<path d="M1189 1269h8v11h4v3h-16v-3h4z" fill="#8f9590"/>
<path d="M1189 1322h8v11h4v3h-16v-3h4z" fill="#8f9590"/>
<polygon points="1146.0,1036.0 1160.0,1034.0 1178.0,1046.0 1182.0,1054.0 1170.0,1056.0 1152.0,1048.0" fill="#c9c6c0" />
</g>
<polygon points="1226,380 2671,309 2667,1129 1208,1193 1784,797 1725,965 1983,761" fill="#fb323c" stroke="#1a1a1a" stroke-width="1.3" stroke-linejoin="miter"/>
</svg>
</div>

<div style="position:absolute;left:954px;top:836px;width:2px;height:34px;background-image:linear-gradient(#9a9a9a 2px,transparent 2px);background-size:2px 6px"></div>
<div id="statusbar">
<div style="position:absolute;left:-3px;top:1485px;width:435px;height:30px;background:#f7f7f7;border:2px solid #b5b5b5;border-radius:5px"></div>
<div style="position:absolute;left:18px;top:1493px;width:24px;height:24px;border:2.500px solid #555;border-radius:50%"></div>
<div style="position:absolute;left:56px;top:1493px;font-size:24px;line-height:28px;color:#8a8a8a;white-space:nowrap;letter-spacing:.5px">Type to locate (⌘K)</div>
<div style="position:absolute;left:1222px;top:1486px;width:252px;height:30px;background:#f7f7f7;border:2px solid #b5b5b5;border-radius:4px"></div>
<div style="position:absolute;left:1604px;top:1486px;width:188px;height:30px;background:#f7f7f7;border:2px solid #b5b5b5;border-radius:4px"></div>
<div style="position:absolute;left:1750px;top:1487px;width:2px;height:28px;background:#c9c9c9"></div>
<div style="position:absolute;left:1964px;top:1486px;width:192px;height:30px;background:#f7f7f7;border:2px solid #b5b5b5;border-radius:4px"></div>
<div style="position:absolute;left:2124px;top:1487px;width:2px;height:28px;background:#c9c9c9"></div>
<div style="position:absolute;left:2280px;top:1486px;width:184px;height:30px;background:#f7f7f7;border:2px solid #b5b5b5;border-radius:4px"></div>
<div style="position:absolute;left:2432px;top:1487px;width:2px;height:28px;background:#c9c9c9"></div>
<div style="position:absolute;left:2476px;top:1494px;width:22px;height:22px;background:#fff;border:2px solid #b0b0b0;border-radius:3px"></div>
<div style="position:absolute;left:1484px;top:1487px;font-family:'Liberation Serif',serif;font-weight:bold;font-style:italic;font-size:34px;line-height:30px">N</div>
<div style="position:absolute;left:2826px;top:1493px;width:40px;height:40px;background:#444;border-radius:50%"></div>
<div style="position:absolute;left:2625px;top:1496px;width:22px;height:16px;background:#777;border-radius:50% 50% 0 0"></div>
<div style="position:absolute;left:1817px;top:1493px;width:22px;height:22px;border:2px solid #888;border-radius:50%"></div>
<svg style="position:absolute;left:2134px;top:1492px" width="14" height="10"><path d="M0 10l7-8 7 8z" fill="#444"/></svg>
<svg style="position:absolute;left:2442px;top:1492px" width="14" height="10"><path d="M0 10l7-8 7 8z" fill="#444"/></svg>

</div>
</div>
</body>
</html>
